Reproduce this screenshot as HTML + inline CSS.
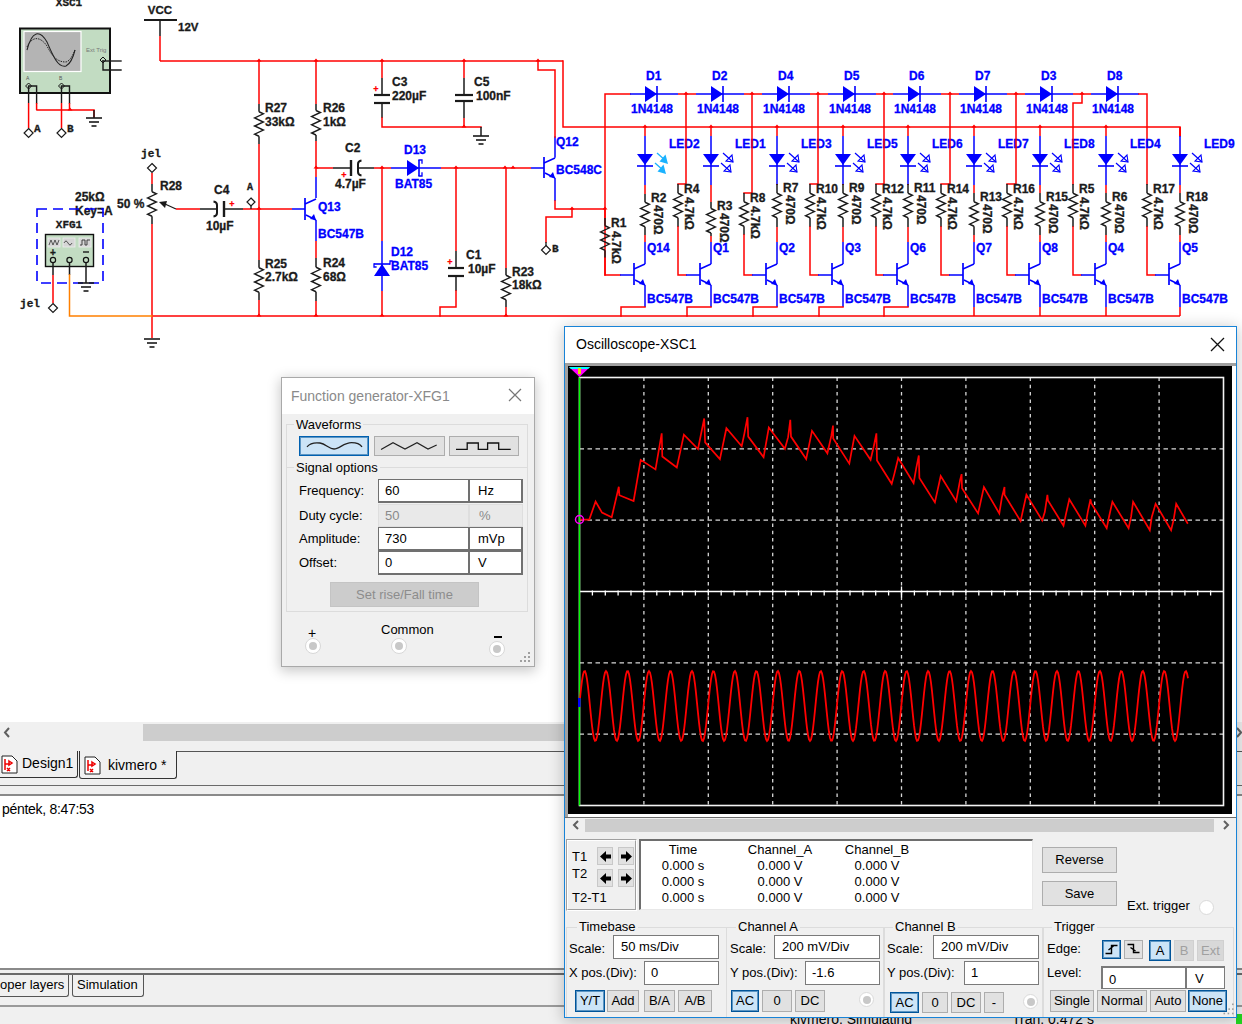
<!DOCTYPE html><html><head><meta charset="utf-8"><title>Multisim</title><style>

*{box-sizing:border-box}
html,body{margin:0;padding:0}
body{width:1242px;height:1024px;overflow:hidden;position:relative;background:#fff;font-family:"Liberation Sans",sans-serif;color:#000}
.a{position:absolute}
.t{position:absolute;white-space:nowrap;font-size:12px;line-height:14px}
.btn{position:absolute;background:#e1e1e1;border:1px solid #adadad;font-size:12px;text-align:center;white-space:nowrap}
.sel{background:#cce4f7;border:1px solid #005499;box-shadow:inset 0 0 0 1px rgba(0,84,153,0.55)}
.inp{position:absolute;background:#fff;border:1px solid #7a7a7a;font-size:12px;white-space:nowrap;padding-left:6px}
.grp{position:absolute;border:1px solid #dcdcdc}
.gl{position:absolute;background:#f0f0f0;padding:0 2px;font-size:12px;line-height:13px;white-space:nowrap}
.radio{position:absolute;border-radius:50%;background:#fff;border:1px solid #dadada}
.radio i{position:absolute;left:3px;top:3px;width:8px;height:8px;border-radius:50%;background:#c8c8c8}

</style></head><body>
<svg class="a" style="left:0;top:0" width="1242" height="360" viewBox="0 0 1242 360"><text x="69" y="6" fill="#1a1a1a" font-family='"Liberation Mono",monospace' font-size="11" font-weight="bold" text-anchor="middle" stroke="#1a1a1a" stroke-width="0.3" >XSC1</text>
<rect x="20" y="28.5" width="90" height="64.5" fill="#c2dcc2" stroke="#111" stroke-width="2"/>
<rect x="24" y="31.5" width="57" height="40" fill="#b4b4b4" stroke="#fff" stroke-width="1.2"/>
<path d="M27 50 C32 30 40 30 47 42 C53 56 58 68 66 66 C70 64 73 58 75 50" fill="none" stroke="#222" stroke-width="1.1"/>
<path d="M27 47 C32 36 40 36 47 46 C53 58 58 62 66 62 C70 61 73 55 75 50" fill="none" stroke="#222" stroke-width="1" stroke-dasharray="1.5,1"/>
<text x="86" y="52" font-family='"Liberation Sans",sans-serif' font-size="6" fill="#777">Ext Trig</text>
<text x="26" y="80" font-family='"Liberation Sans",sans-serif' font-size="5" fill="#555">A</text>
<text x="59" y="80" font-family='"Liberation Sans",sans-serif' font-size="5" fill="#555">B</text>
<path d="M28.6 83 L31.6 86 L28.6 89 L25.6 86 Z" fill="#c2dcc2" stroke="#111" stroke-width="1"/>
<polyline points="28.6,86 36.6,86 36.6,103" fill="none" stroke="#1a1a1a" stroke-width="1.4" stroke-linecap="square"/>
<line x1="28.6" y1="86" x2="28.6" y2="103" stroke="#1a1a1a" stroke-width="1.4"/>
<line x1="28.6" y1="103" x2="28.6" y2="128" stroke="#ff0000" stroke-width="1.5"/>
<path d="M28.6 128.5 L33.1 133 L28.6 137.5 L24.1 133 Z" fill="#fff" stroke="#1a1a1a" stroke-width="1.2"/>
<line x1="36.6" y1="103" x2="36.6" y2="110" stroke="#ff0000" stroke-width="1.5"/>
<path d="M61.5 83 L64.5 86 L61.5 89 L58.5 86 Z" fill="#c2dcc2" stroke="#111" stroke-width="1"/>
<polyline points="61.5,86 69.5,86 69.5,103" fill="none" stroke="#1a1a1a" stroke-width="1.4" stroke-linecap="square"/>
<line x1="61.5" y1="86" x2="61.5" y2="103" stroke="#1a1a1a" stroke-width="1.4"/>
<line x1="61.5" y1="103" x2="61.5" y2="128" stroke="#ff0000" stroke-width="1.5"/>
<path d="M61.5 128.5 L66.0 133 L61.5 137.5 L57.0 133 Z" fill="#fff" stroke="#1a1a1a" stroke-width="1.2"/>
<line x1="69.5" y1="103" x2="69.5" y2="110" stroke="#ff0000" stroke-width="1.5"/>
<polyline points="37,110 94,110 94,117" fill="none" stroke="#ff0000" stroke-width="1.5" stroke-linecap="square"/>
<line x1="94" y1="110" x2="94" y2="118" stroke="#1a1a1a" stroke-width="1.5"/>
<line x1="86" y1="118" x2="102" y2="118" stroke="#1a1a1a" stroke-width="1.6"/>
<line x1="89" y1="122" x2="99" y2="122" stroke="#1a1a1a" stroke-width="1.6"/>
<line x1="91.5" y1="126" x2="96.5" y2="126" stroke="#1a1a1a" stroke-width="1.6"/>
<path d="M67.5 110.5 L70 107.5 L72.5 110.5 Z" fill="#ff0000"/>
<text x="34" y="132" fill="#1a1a1a" font-family='"Liberation Mono",monospace' font-size="11" font-weight="bold" text-anchor="start" stroke="#1a1a1a" stroke-width="0.3" >A</text>
<text x="67" y="132" fill="#1a1a1a" font-family='"Liberation Mono",monospace' font-size="11" font-weight="bold" text-anchor="start" stroke="#1a1a1a" stroke-width="0.3" >B</text>
<path d="M103 57 L106 60 L103 63 L100 60 Z" fill="#c2dcc2" stroke="#111" stroke-width="1"/>
<polyline points="103,61 121,61" fill="none" stroke="#1a1a1a" stroke-width="1.4" stroke-linecap="square"/>
<polyline points="103,61 103,70 121,70" fill="none" stroke="#1a1a1a" stroke-width="1.4" stroke-linecap="square"/>
<line x1="144" y1="20" x2="177" y2="20" stroke="#1a1a1a" stroke-width="2"/>
<line x1="160" y1="20" x2="160" y2="36" stroke="#1a1a1a" stroke-width="1.5"/>
<line x1="160" y1="36" x2="160" y2="61" stroke="#ff0000" stroke-width="1.5"/>
<text x="160" y="14" fill="#1a1a1a" font-family='"Liberation Sans",sans-serif' font-size="11.5" font-weight="bold" text-anchor="middle" stroke="#1a1a1a" stroke-width="0.3" >VCC</text>
<text x="178" y="31" fill="#1a1a1a" font-family='"Liberation Sans",sans-serif' font-size="11.5" font-weight="bold" text-anchor="start" stroke="#1a1a1a" stroke-width="0.3" >12V</text>
<line x1="160" y1="61" x2="563" y2="61" stroke="#ff0000" stroke-width="1.5"/>
<path d="M256.5 61.5 L259 58.5 L261.5 61.5 Z" fill="#ff0000"/>
<path d="M313.5 61.5 L316 58.5 L318.5 61.5 Z" fill="#ff0000"/>
<path d="M379.5 61.5 L382 58.5 L384.5 61.5 Z" fill="#ff0000"/>
<path d="M461.5 61.5 L464 58.5 L466.5 61.5 Z" fill="#ff0000"/>
<path d="M535.5 61.5 L538 58.5 L540.5 61.5 Z" fill="#ff0000"/>
<line x1="259" y1="61" x2="259" y2="104" stroke="#ff0000" stroke-width="1.5"/>
<line x1="259" y1="104" x2="259" y2="111.75" stroke="#1a1a1a" stroke-width="1.5"/>
<polyline points="259,111.75 263.4,113.8 254.6,117.9 263.4,122.0 254.6,126.0 263.4,130.1 254.6,134.2 259,136.25" fill="none" stroke="#1a1a1a" stroke-width="1.4"/>
<line x1="259" y1="136.25" x2="259" y2="144" stroke="#1a1a1a" stroke-width="1.5"/>
<line x1="259" y1="144" x2="259" y2="260" stroke="#ff0000" stroke-width="1.5"/>
<line x1="259" y1="260" x2="259" y2="267.75" stroke="#1a1a1a" stroke-width="1.5"/>
<polyline points="259,267.75 263.4,269.8 254.6,273.9 263.4,278.0 254.6,282.0 263.4,286.1 254.6,290.2 259,292.25" fill="none" stroke="#1a1a1a" stroke-width="1.4"/>
<line x1="259" y1="292.25" x2="259" y2="300" stroke="#1a1a1a" stroke-width="1.5"/>
<line x1="259" y1="300" x2="259" y2="316" stroke="#ff0000" stroke-width="1.5"/>
<text x="265" y="111.5" fill="#1a1a1a" font-family='"Liberation Sans",sans-serif' font-size="12" font-weight="bold" text-anchor="start" stroke="#1a1a1a" stroke-width="0.3" >R27</text>
<text x="265" y="126" fill="#1a1a1a" font-family='"Liberation Sans",sans-serif' font-size="12" font-weight="bold" text-anchor="start" stroke="#1a1a1a" stroke-width="0.3" >33kΩ</text>
<text x="265" y="268" fill="#1a1a1a" font-family='"Liberation Sans",sans-serif' font-size="12" font-weight="bold" text-anchor="start" stroke="#1a1a1a" stroke-width="0.3" >R25</text>
<text x="265" y="281" fill="#1a1a1a" font-family='"Liberation Sans",sans-serif' font-size="12" font-weight="bold" text-anchor="start" stroke="#1a1a1a" stroke-width="0.3" >2.7kΩ</text>
<line x1="316" y1="61" x2="316" y2="104" stroke="#ff0000" stroke-width="1.5"/>
<line x1="316" y1="104" x2="316" y2="110.5" stroke="#1a1a1a" stroke-width="1.5"/>
<polyline points="316,110.5 320.4,112.5 311.6,116.6 320.4,120.7 311.6,124.8 320.4,128.9 311.6,133.0 316,135.0" fill="none" stroke="#1a1a1a" stroke-width="1.4"/>
<line x1="316" y1="135.0" x2="316" y2="141" stroke="#1a1a1a" stroke-width="1.5"/>
<line x1="316" y1="141" x2="316" y2="177" stroke="#ff0000" stroke-width="1.5"/>
<line x1="316" y1="177" x2="316" y2="198" stroke="#0000ff" stroke-width="1.5"/>
<line x1="305" y1="198" x2="305" y2="220" stroke="#0000ff" stroke-width="1.7"/>
<line x1="305" y1="204" x2="316" y2="199" stroke="#0000ff" stroke-width="1.5"/>
<line x1="306" y1="215" x2="316" y2="220" stroke="#0000ff" stroke-width="1.5"/>
<path d="M316 220 L310 219 L314 214 Z" fill="#0000ff"/>
<line x1="316" y1="220" x2="316" y2="241" stroke="#0000ff" stroke-width="1.5"/>
<line x1="316" y1="241" x2="316" y2="258" stroke="#ff0000" stroke-width="1.5"/>
<line x1="316" y1="258" x2="316" y2="267.25" stroke="#1a1a1a" stroke-width="1.5"/>
<polyline points="316,267.25 320.4,269.3 311.6,273.4 320.4,277.5 311.6,281.5 320.4,285.6 311.6,289.7 316,291.75" fill="none" stroke="#1a1a1a" stroke-width="1.4"/>
<line x1="316" y1="291.75" x2="316" y2="301" stroke="#1a1a1a" stroke-width="1.5"/>
<line x1="316" y1="301" x2="316" y2="316" stroke="#ff0000" stroke-width="1.5"/>
<text x="323" y="111.5" fill="#1a1a1a" font-family='"Liberation Sans",sans-serif' font-size="12" font-weight="bold" text-anchor="start" stroke="#1a1a1a" stroke-width="0.3" >R26</text>
<text x="323" y="126" fill="#1a1a1a" font-family='"Liberation Sans",sans-serif' font-size="12" font-weight="bold" text-anchor="start" stroke="#1a1a1a" stroke-width="0.3" >1kΩ</text>
<text x="318" y="211" fill="#0000ff" font-family='"Liberation Sans",sans-serif' font-size="12" font-weight="bold" text-anchor="start" stroke="#0000ff" stroke-width="0.3" >Q13</text>
<text x="318" y="238" fill="#0000ff" font-family='"Liberation Sans",sans-serif' font-size="12" font-weight="bold" text-anchor="start" stroke="#0000ff" stroke-width="0.3" >BC547B</text>
<text x="323" y="267" fill="#1a1a1a" font-family='"Liberation Sans",sans-serif' font-size="12" font-weight="bold" text-anchor="start" stroke="#1a1a1a" stroke-width="0.3" >R24</text>
<text x="323" y="281" fill="#1a1a1a" font-family='"Liberation Sans",sans-serif' font-size="12" font-weight="bold" text-anchor="start" stroke="#1a1a1a" stroke-width="0.3" >68Ω</text>
<line x1="382" y1="61" x2="382" y2="78" stroke="#ff0000" stroke-width="1.5"/>
<line x1="382" y1="78" x2="382" y2="95" stroke="#1a1a1a" stroke-width="1.5"/>
<line x1="374" y1="95" x2="390" y2="95" stroke="#1a1a1a" stroke-width="2.2"/>
<line x1="374" y1="103" x2="390" y2="103" stroke="#1a1a1a" stroke-width="2.2"/>
<line x1="382" y1="103" x2="382" y2="118" stroke="#1a1a1a" stroke-width="1.5"/>
<polyline points="382,118 382,127 481,127" fill="none" stroke="#ff0000" stroke-width="1.5" stroke-linecap="square"/>
<text x="376" y="92" fill="#ff0000" font-family='"Liberation Sans",sans-serif' font-size="9" font-weight="bold" text-anchor="middle" stroke="#ff0000" stroke-width="0.3" >+</text>
<text x="392" y="86" fill="#1a1a1a" font-family='"Liberation Sans",sans-serif' font-size="12" font-weight="bold" text-anchor="start" stroke="#1a1a1a" stroke-width="0.3" >C3</text>
<text x="392" y="100" fill="#1a1a1a" font-family='"Liberation Sans",sans-serif' font-size="12" font-weight="bold" text-anchor="start" stroke="#1a1a1a" stroke-width="0.3" >220µF</text>
<line x1="464" y1="61" x2="464" y2="78" stroke="#ff0000" stroke-width="1.5"/>
<line x1="464" y1="78" x2="464" y2="95" stroke="#1a1a1a" stroke-width="1.5"/>
<line x1="455" y1="95" x2="473" y2="95" stroke="#1a1a1a" stroke-width="2.2"/>
<line x1="455" y1="101" x2="473" y2="101" stroke="#1a1a1a" stroke-width="2.2"/>
<line x1="464" y1="101" x2="464" y2="118" stroke="#1a1a1a" stroke-width="1.5"/>
<line x1="464" y1="118" x2="464" y2="127" stroke="#ff0000" stroke-width="1.5"/>
<path d="M461.5 127.5 L464 124.5 L466.5 127.5 Z" fill="#ff0000"/>
<text x="474" y="86" fill="#1a1a1a" font-family='"Liberation Sans",sans-serif' font-size="12" font-weight="bold" text-anchor="start" stroke="#1a1a1a" stroke-width="0.3" >C5</text>
<text x="476" y="100" fill="#1a1a1a" font-family='"Liberation Sans",sans-serif' font-size="12" font-weight="bold" text-anchor="start" stroke="#1a1a1a" stroke-width="0.3" >100nF</text>
<line x1="481" y1="127" x2="481" y2="136" stroke="#1a1a1a" stroke-width="1.5"/>
<line x1="473" y1="136" x2="489" y2="136" stroke="#1a1a1a" stroke-width="1.6"/>
<line x1="476" y1="140" x2="486" y2="140" stroke="#1a1a1a" stroke-width="1.6"/>
<line x1="478.5" y1="144" x2="483.5" y2="144" stroke="#1a1a1a" stroke-width="1.6"/>
<path d="M313.5 168.5 L316 165.5 L318.5 168.5 Z" fill="#ff0000"/>
<line x1="316" y1="168" x2="333" y2="168" stroke="#ff0000" stroke-width="1.5"/>
<line x1="333" y1="168" x2="351" y2="168" stroke="#1a1a1a" stroke-width="1.5"/>
<line x1="351" y1="160" x2="351" y2="176" stroke="#1a1a1a" stroke-width="2.4"/>
<path d="M361.5 160.5 Q358 161 358 164 V172 Q358 175 361.5 175.5" fill="none" stroke="#1a1a1a" stroke-width="2"/>
<line x1="357" y1="168" x2="374" y2="168" stroke="#1a1a1a" stroke-width="1.5"/>
<line x1="374" y1="168" x2="391" y2="168" stroke="#ff0000" stroke-width="1.5"/>
<path d="M379.5 168.5 L382 165.5 L384.5 168.5 Z" fill="#ff0000"/>
<text x="344" y="178" fill="#ff0000" font-family='"Liberation Sans",sans-serif' font-size="9" font-weight="bold" text-anchor="middle" stroke="#ff0000" stroke-width="0.3" >+</text>
<text x="345" y="152" fill="#1a1a1a" font-family='"Liberation Sans",sans-serif' font-size="12" font-weight="bold" text-anchor="start" stroke="#1a1a1a" stroke-width="0.3" >C2</text>
<text x="335" y="188" fill="#1a1a1a" font-family='"Liberation Sans",sans-serif' font-size="12" font-weight="bold" text-anchor="start" stroke="#1a1a1a" stroke-width="0.3" >4.7µF</text>
<line x1="391" y1="168" x2="441" y2="168" stroke="#0000ff" stroke-width="1.5"/>
<path d="M407 160 L419 168 L407 176 Z" fill="#0000ff"/>
<line x1="419" y1="160" x2="419" y2="176" stroke="#0000ff" stroke-width="1.6"/>
<polyline points="419,160 422,160 422,163" fill="none" stroke="#0000ff" stroke-width="1.3" stroke-linecap="square"/>
<polyline points="419,176 422,176 422,173" fill="none" stroke="#0000ff" stroke-width="1.3" stroke-linecap="square"/>
<text x="404" y="154" fill="#0000ff" font-family='"Liberation Sans",sans-serif' font-size="12" font-weight="bold" text-anchor="start" stroke="#0000ff" stroke-width="0.3" >D13</text>
<text x="395" y="188" fill="#0000ff" font-family='"Liberation Sans",sans-serif' font-size="12" font-weight="bold" text-anchor="start" stroke="#0000ff" stroke-width="0.3" >BAT85</text>
<line x1="441" y1="168" x2="531" y2="168" stroke="#ff0000" stroke-width="1.5"/>
<path d="M453.5 168.5 L456 165.5 L458.5 168.5 Z" fill="#ff0000"/>
<path d="M502.5 168.5 L505 165.5 L507.5 168.5 Z" fill="#ff0000"/>
<path d="M510.5 168.5 L513 165.5 L515.5 168.5 Z" fill="#ff0000"/>
<line x1="531" y1="168" x2="544" y2="168" stroke="#0000ff" stroke-width="1.5"/>
<line x1="544" y1="157" x2="544" y2="178" stroke="#0000ff" stroke-width="1.7"/>
<line x1="544" y1="163" x2="555" y2="158" stroke="#0000ff" stroke-width="1.5"/>
<line x1="545" y1="173" x2="555" y2="178" stroke="#0000ff" stroke-width="1.5"/>
<path d="M555 178 L549 177 L553 172 Z" fill="#0000ff"/>
<polyline points="555,157 555,137" fill="none" stroke="#0000ff" stroke-width="1.5" stroke-linecap="square"/>
<polyline points="538,61 538,70 555,70 555,137" fill="none" stroke="#ff0000" stroke-width="1.5" stroke-linecap="square"/>
<polyline points="563,61 563,127 1180,127 1180,136" fill="none" stroke="#ff0000" stroke-width="1.5" stroke-linecap="square"/>
<line x1="555" y1="178" x2="555" y2="201" stroke="#0000ff" stroke-width="1.5"/>
<polyline points="555,201 555,209 605,209" fill="none" stroke="#ff0000" stroke-width="1.5" stroke-linecap="square"/>
<path d="M569.5 209.5 L572 206.5 L574.5 209.5 Z" fill="#ff0000"/>
<polyline points="572,209 572,217 546,217 546,242" fill="none" stroke="#ff0000" stroke-width="1.5" stroke-linecap="square"/>
<line x1="546" y1="242" x2="546" y2="246" stroke="#1a1a1a" stroke-width="1.3"/>
<path d="M546 245.5 L550.5 250 L546 254.5 L541.5 250 Z" fill="#fff" stroke="#1a1a1a" stroke-width="1.2"/>
<text x="552" y="252" fill="#1a1a1a" font-family='"Liberation Mono",monospace' font-size="11" font-weight="bold" text-anchor="start" stroke="#1a1a1a" stroke-width="0.3" >B</text>
<text x="556" y="146" fill="#0000ff" font-family='"Liberation Sans",sans-serif' font-size="12" font-weight="bold" text-anchor="start" stroke="#0000ff" stroke-width="0.3" >Q12</text>
<text x="556" y="174" fill="#0000ff" font-family='"Liberation Sans",sans-serif' font-size="12" font-weight="bold" text-anchor="start" stroke="#0000ff" stroke-width="0.3" >BC548C</text>
<line x1="382" y1="168" x2="382" y2="241" stroke="#ff0000" stroke-width="1.5"/>
<line x1="382" y1="241" x2="382" y2="291" stroke="#0000ff" stroke-width="1.5"/>
<path d="M374 276 L390 276 L382 264 Z" fill="#0000ff"/>
<line x1="374" y1="264" x2="390" y2="264" stroke="#0000ff" stroke-width="1.6"/>
<polyline points="374,264 374,267 376,267" fill="none" stroke="#0000ff" stroke-width="1.3" stroke-linecap="square"/>
<polyline points="390,264 390,261 392,261" fill="none" stroke="#0000ff" stroke-width="1.3" stroke-linecap="square"/>
<line x1="382" y1="291" x2="382" y2="316" stroke="#ff0000" stroke-width="1.5"/>
<text x="391" y="256" fill="#0000ff" font-family='"Liberation Sans",sans-serif' font-size="12" font-weight="bold" text-anchor="start" stroke="#0000ff" stroke-width="0.3" >D12</text>
<text x="391" y="270" fill="#0000ff" font-family='"Liberation Sans",sans-serif' font-size="12" font-weight="bold" text-anchor="start" stroke="#0000ff" stroke-width="0.3" >BAT85</text>
<line x1="456" y1="168" x2="456" y2="251" stroke="#ff0000" stroke-width="1.5"/>
<line x1="456" y1="251" x2="456" y2="268" stroke="#1a1a1a" stroke-width="1.5"/>
<line x1="448" y1="268" x2="464" y2="268" stroke="#1a1a1a" stroke-width="2.2"/>
<line x1="448" y1="276" x2="464" y2="276" stroke="#1a1a1a" stroke-width="2.2"/>
<line x1="456" y1="276" x2="456" y2="291" stroke="#1a1a1a" stroke-width="1.5"/>
<polyline points="456,291 456,307 440,307 440,316" fill="none" stroke="#ff0000" stroke-width="1.5" stroke-linecap="square"/>
<text x="450" y="265" fill="#ff0000" font-family='"Liberation Sans",sans-serif' font-size="9" font-weight="bold" text-anchor="middle" stroke="#ff0000" stroke-width="0.3" >+</text>
<text x="466" y="259" fill="#1a1a1a" font-family='"Liberation Sans",sans-serif' font-size="12" font-weight="bold" text-anchor="start" stroke="#1a1a1a" stroke-width="0.3" >C1</text>
<text x="468" y="273" fill="#1a1a1a" font-family='"Liberation Sans",sans-serif' font-size="12" font-weight="bold" text-anchor="start" stroke="#1a1a1a" stroke-width="0.3" >10µF</text>
<line x1="506" y1="168" x2="506" y2="268" stroke="#ff0000" stroke-width="1.5"/>
<line x1="506" y1="268" x2="506" y2="275.25" stroke="#1a1a1a" stroke-width="1.5"/>
<polyline points="506,275.25 510.4,277.3 501.6,281.4 510.4,285.5 501.6,289.5 510.4,293.6 501.6,297.7 506,299.75" fill="none" stroke="#1a1a1a" stroke-width="1.4"/>
<line x1="506" y1="299.75" x2="506" y2="307" stroke="#1a1a1a" stroke-width="1.5"/>
<line x1="506" y1="307" x2="506" y2="316" stroke="#ff0000" stroke-width="1.5"/>
<path d="M503.5 316.5 L506 313.5 L508.5 316.5 Z" fill="#ff0000"/>
<text x="512" y="276" fill="#1a1a1a" font-family='"Liberation Sans",sans-serif' font-size="12" font-weight="bold" text-anchor="start" stroke="#1a1a1a" stroke-width="0.3" >R23</text>
<text x="512" y="289" fill="#1a1a1a" font-family='"Liberation Sans",sans-serif' font-size="12" font-weight="bold" text-anchor="start" stroke="#1a1a1a" stroke-width="0.3" >18kΩ</text>
<line x1="152" y1="316" x2="1180" y2="316" stroke="#ff0000" stroke-width="1.5"/>
<path d="M256.5 316.5 L259 313.5 L261.5 316.5 Z" fill="#ff0000"/>
<path d="M313.5 316.5 L316 313.5 L318.5 316.5 Z" fill="#ff0000"/>
<path d="M379.5 316.5 L382 313.5 L384.5 316.5 Z" fill="#ff0000"/>
<text x="151" y="157" fill="#1a1a1a" font-family='"Liberation Mono",monospace' font-size="11" font-weight="bold" text-anchor="middle" stroke="#1a1a1a" stroke-width="0.3" >jel</text>
<path d="M152 163.5 L156.5 168 L152 172.5 L147.5 168 Z" fill="#fff" stroke="#1a1a1a" stroke-width="1.2"/>
<line x1="152" y1="173" x2="152" y2="184" stroke="#ff0000" stroke-width="1.5"/>
<line x1="152" y1="184" x2="152" y2="191.75" stroke="#1a1a1a" stroke-width="1.5"/>
<polyline points="152,191.75 156.4,193.8 147.6,197.9 156.4,202.0 147.6,206.0 156.4,210.1 147.6,214.2 152,216.25" fill="none" stroke="#1a1a1a" stroke-width="1.4"/>
<line x1="152" y1="216.25" x2="152" y2="224" stroke="#1a1a1a" stroke-width="1.5"/>
<line x1="152" y1="224" x2="152" y2="338" stroke="#ff0000" stroke-width="1.5"/>
<line x1="144" y1="339" x2="160" y2="339" stroke="#1a1a1a" stroke-width="1.6"/>
<line x1="147" y1="343" x2="157" y2="343" stroke="#1a1a1a" stroke-width="1.6"/>
<line x1="149.5" y1="347" x2="154.5" y2="347" stroke="#1a1a1a" stroke-width="1.6"/>
<line x1="176" y1="209" x2="165" y2="204" stroke="#1a1a1a" stroke-width="1.3"/>
<path d="M159 202 L167 201 L165 208 Z" fill="#1a1a1a"/>
<line x1="176" y1="209" x2="200" y2="209" stroke="#ff0000" stroke-width="1.5"/>
<text x="160" y="190" fill="#1a1a1a" font-family='"Liberation Sans",sans-serif' font-size="12" font-weight="bold" text-anchor="start" stroke="#1a1a1a" stroke-width="0.3" >R28</text>
<text x="117" y="208" fill="#1a1a1a" font-family='"Liberation Sans",sans-serif' font-size="12" font-weight="bold" text-anchor="start" stroke="#1a1a1a" stroke-width="0.3" >50 %</text>
<text x="75" y="201" fill="#1a1a1a" font-family='"Liberation Sans",sans-serif' font-size="12" font-weight="bold" text-anchor="start" stroke="#1a1a1a" stroke-width="0.3" >25kΩ</text>
<text x="75" y="215" fill="#1a1a1a" font-family='"Liberation Sans",sans-serif' font-size="12" font-weight="bold" text-anchor="start" stroke="#1a1a1a" stroke-width="0.3" >Key=A</text>
<line x1="200" y1="209" x2="217" y2="209" stroke="#1a1a1a" stroke-width="1.5"/>
<path d="M213.5 201.5 Q217 202 217 205 V213 Q217 216 213.5 216.5" fill="none" stroke="#1a1a1a" stroke-width="2"/>
<line x1="224" y1="201" x2="224" y2="217" stroke="#1a1a1a" stroke-width="2.4"/>
<line x1="224" y1="209" x2="243" y2="209" stroke="#1a1a1a" stroke-width="1.5"/>
<text x="232" y="207" fill="#ff0000" font-family='"Liberation Sans",sans-serif' font-size="9" font-weight="bold" text-anchor="middle" stroke="#ff0000" stroke-width="0.3" >+</text>
<text x="214" y="194" fill="#1a1a1a" font-family='"Liberation Sans",sans-serif' font-size="12" font-weight="bold" text-anchor="start" stroke="#1a1a1a" stroke-width="0.3" >C4</text>
<text x="206" y="230" fill="#1a1a1a" font-family='"Liberation Sans",sans-serif' font-size="12" font-weight="bold" text-anchor="start" stroke="#1a1a1a" stroke-width="0.3" >10µF</text>
<line x1="243" y1="209" x2="292" y2="209" stroke="#ff0000" stroke-width="1.5"/>
<line x1="292" y1="209" x2="305" y2="209" stroke="#0000ff" stroke-width="1.5"/>
<path d="M251 198 L255 202 L251 206 L247 202 Z" fill="#fff" stroke="#1a1a1a" stroke-width="1.2"/>
<line x1="251" y1="206" x2="251" y2="209" stroke="#1a1a1a" stroke-width="1.3"/>
<text x="250" y="190" fill="#1a1a1a" font-family='"Liberation Mono",monospace' font-size="10" font-weight="bold" text-anchor="middle" stroke="#1a1a1a" stroke-width="0.3" >A</text>
<path d="M256.5 209.5 L259 206.5 L261.5 209.5 Z" fill="#ff0000"/>
<rect x="37" y="209" width="66" height="74" fill="none" stroke="#0000ff" stroke-width="1.6" stroke-dasharray="10,6"/>
<text x="69" y="228" fill="#1a1a1a" font-family='"Liberation Mono",monospace' font-size="11" font-weight="bold" text-anchor="middle" stroke="#1a1a1a" stroke-width="0.3" >XFG1</text>
<rect x="45.5" y="234.5" width="48" height="32" fill="#c2dcc2" stroke="#111" stroke-width="1.4"/>
<rect x="48" y="238" width="12" height="9" fill="#d6d6d6" stroke="#eee" stroke-width="0.8"/>
<rect x="63" y="238" width="12" height="9" fill="#d6d6d6" stroke="#eee" stroke-width="0.8"/>
<rect x="79" y="238" width="12" height="9" fill="#d6d6d6" stroke="#eee" stroke-width="0.8"/>
<path d="M49 245 L51 240 L53 245 L55 240 L57 245 L59 240" stroke="#333" stroke-width="0.8" fill="none"/>
<path d="M64 243 Q66 239 68 243 Q70 247 72 243" stroke="#333" stroke-width="0.8" fill="none"/>
<path d="M80 245 H82 V240 H85 V245 H87 V240 H90" stroke="#333" stroke-width="0.9" fill="none"/>
<text x="53" y="256" fill="#1a1a1a" font-family='"Liberation Sans",sans-serif' font-size="10" font-weight="bold" text-anchor="middle" stroke="#1a1a1a" stroke-width="0.3" >+</text>
<line x1="83" y1="252" x2="89" y2="252" stroke="#1a1a1a" stroke-width="1.4"/>
<circle cx="53" cy="260" r="2.6" fill="#c2dcc2" stroke="#111" stroke-width="1.2"/>
<circle cx="69.5" cy="260" r="2.6" fill="#c2dcc2" stroke="#111" stroke-width="1.2"/>
<circle cx="86" cy="260" r="2.6" fill="#c2dcc2" stroke="#111" stroke-width="1.2"/>
<line x1="53" y1="263" x2="53" y2="275" stroke="#1a1a1a" stroke-width="1.5"/>
<line x1="53" y1="275" x2="53" y2="303" stroke="#ff0000" stroke-width="1.5"/>
<path d="M53 303.5 L57.5 308 L53 312.5 L48.5 308 Z" fill="#fff" stroke="#1a1a1a" stroke-width="1.2"/>
<text x="30" y="307" fill="#1a1a1a" font-family='"Liberation Mono",monospace' font-size="11" font-weight="bold" text-anchor="middle" stroke="#1a1a1a" stroke-width="0.3" >jel</text>
<line x1="69.5" y1="263" x2="69.5" y2="275" stroke="#1a1a1a" stroke-width="1.5"/>
<polyline points="69.5,275 69.5,316 152,316" fill="none" stroke="#ff8000" stroke-width="1.5" stroke-linecap="square"/>
<line x1="86" y1="263" x2="86" y2="283" stroke="#1a1a1a" stroke-width="1.5"/>
<line x1="78" y1="283" x2="94" y2="283" stroke="#1a1a1a" stroke-width="1.6"/>
<line x1="81" y1="287" x2="91" y2="287" stroke="#1a1a1a" stroke-width="1.6"/>
<line x1="83.5" y1="291" x2="88.5" y2="291" stroke="#1a1a1a" stroke-width="1.6"/>
<polyline points="605,275 605,94 630,94" fill="none" stroke="#ff0000" stroke-width="1.5" stroke-linecap="square"/>
<line x1="630" y1="94" x2="678" y2="94" stroke="#0000ff" stroke-width="1.5"/>
<path d="M645 86 L657 94 L645 102 Z" fill="#0000ff"/>
<line x1="657" y1="86" x2="657" y2="102" stroke="#0000ff" stroke-width="1.6"/>
<text x="646" y="79.5" fill="#0000ff" font-family='"Liberation Sans",sans-serif' font-size="12" font-weight="bold" text-anchor="start" stroke="#0000ff" stroke-width="0.3" >D1</text>
<text x="631" y="113" fill="#0000ff" font-family='"Liberation Sans",sans-serif' font-size="12" font-weight="bold" text-anchor="start" stroke="#0000ff" stroke-width="0.3" >1N4148</text>
<line x1="678" y1="94" x2="696" y2="94" stroke="#ff0000" stroke-width="1.5"/>
<line x1="696" y1="94" x2="744" y2="94" stroke="#0000ff" stroke-width="1.5"/>
<path d="M711 86 L723 94 L711 102 Z" fill="#0000ff"/>
<line x1="723" y1="86" x2="723" y2="102" stroke="#0000ff" stroke-width="1.6"/>
<text x="712" y="79.5" fill="#0000ff" font-family='"Liberation Sans",sans-serif' font-size="12" font-weight="bold" text-anchor="start" stroke="#0000ff" stroke-width="0.3" >D2</text>
<text x="697" y="113" fill="#0000ff" font-family='"Liberation Sans",sans-serif' font-size="12" font-weight="bold" text-anchor="start" stroke="#0000ff" stroke-width="0.3" >1N4148</text>
<line x1="744" y1="94" x2="762" y2="94" stroke="#ff0000" stroke-width="1.5"/>
<line x1="762" y1="94" x2="810" y2="94" stroke="#0000ff" stroke-width="1.5"/>
<path d="M777 86 L789 94 L777 102 Z" fill="#0000ff"/>
<line x1="789" y1="86" x2="789" y2="102" stroke="#0000ff" stroke-width="1.6"/>
<text x="778" y="79.5" fill="#0000ff" font-family='"Liberation Sans",sans-serif' font-size="12" font-weight="bold" text-anchor="start" stroke="#0000ff" stroke-width="0.3" >D4</text>
<text x="763" y="113" fill="#0000ff" font-family='"Liberation Sans",sans-serif' font-size="12" font-weight="bold" text-anchor="start" stroke="#0000ff" stroke-width="0.3" >1N4148</text>
<line x1="810" y1="94" x2="828" y2="94" stroke="#ff0000" stroke-width="1.5"/>
<line x1="828" y1="94" x2="876" y2="94" stroke="#0000ff" stroke-width="1.5"/>
<path d="M843 86 L855 94 L843 102 Z" fill="#0000ff"/>
<line x1="855" y1="86" x2="855" y2="102" stroke="#0000ff" stroke-width="1.6"/>
<text x="844" y="79.5" fill="#0000ff" font-family='"Liberation Sans",sans-serif' font-size="12" font-weight="bold" text-anchor="start" stroke="#0000ff" stroke-width="0.3" >D5</text>
<text x="829" y="113" fill="#0000ff" font-family='"Liberation Sans",sans-serif' font-size="12" font-weight="bold" text-anchor="start" stroke="#0000ff" stroke-width="0.3" >1N4148</text>
<line x1="876" y1="94" x2="893" y2="94" stroke="#ff0000" stroke-width="1.5"/>
<line x1="893" y1="94" x2="941" y2="94" stroke="#0000ff" stroke-width="1.5"/>
<path d="M908 86 L920 94 L908 102 Z" fill="#0000ff"/>
<line x1="920" y1="86" x2="920" y2="102" stroke="#0000ff" stroke-width="1.6"/>
<text x="909" y="79.5" fill="#0000ff" font-family='"Liberation Sans",sans-serif' font-size="12" font-weight="bold" text-anchor="start" stroke="#0000ff" stroke-width="0.3" >D6</text>
<text x="894" y="113" fill="#0000ff" font-family='"Liberation Sans",sans-serif' font-size="12" font-weight="bold" text-anchor="start" stroke="#0000ff" stroke-width="0.3" >1N4148</text>
<line x1="941" y1="94" x2="959" y2="94" stroke="#ff0000" stroke-width="1.5"/>
<line x1="959" y1="94" x2="1007" y2="94" stroke="#0000ff" stroke-width="1.5"/>
<path d="M974 86 L986 94 L974 102 Z" fill="#0000ff"/>
<line x1="986" y1="86" x2="986" y2="102" stroke="#0000ff" stroke-width="1.6"/>
<text x="975" y="79.5" fill="#0000ff" font-family='"Liberation Sans",sans-serif' font-size="12" font-weight="bold" text-anchor="start" stroke="#0000ff" stroke-width="0.3" >D7</text>
<text x="960" y="113" fill="#0000ff" font-family='"Liberation Sans",sans-serif' font-size="12" font-weight="bold" text-anchor="start" stroke="#0000ff" stroke-width="0.3" >1N4148</text>
<line x1="1007" y1="94" x2="1025" y2="94" stroke="#ff0000" stroke-width="1.5"/>
<line x1="1025" y1="94" x2="1073" y2="94" stroke="#0000ff" stroke-width="1.5"/>
<path d="M1040 86 L1052 94 L1040 102 Z" fill="#0000ff"/>
<line x1="1052" y1="86" x2="1052" y2="102" stroke="#0000ff" stroke-width="1.6"/>
<text x="1041" y="79.5" fill="#0000ff" font-family='"Liberation Sans",sans-serif' font-size="12" font-weight="bold" text-anchor="start" stroke="#0000ff" stroke-width="0.3" >D3</text>
<text x="1026" y="113" fill="#0000ff" font-family='"Liberation Sans",sans-serif' font-size="12" font-weight="bold" text-anchor="start" stroke="#0000ff" stroke-width="0.3" >1N4148</text>
<line x1="1073" y1="94" x2="1091" y2="94" stroke="#ff0000" stroke-width="1.5"/>
<line x1="1091" y1="94" x2="1139" y2="94" stroke="#0000ff" stroke-width="1.5"/>
<path d="M1106 86 L1118 94 L1106 102 Z" fill="#0000ff"/>
<line x1="1118" y1="86" x2="1118" y2="102" stroke="#0000ff" stroke-width="1.6"/>
<text x="1107" y="79.5" fill="#0000ff" font-family='"Liberation Sans",sans-serif' font-size="12" font-weight="bold" text-anchor="start" stroke="#0000ff" stroke-width="0.3" >D8</text>
<text x="1092" y="113" fill="#0000ff" font-family='"Liberation Sans",sans-serif' font-size="12" font-weight="bold" text-anchor="start" stroke="#0000ff" stroke-width="0.3" >1N4148</text>
<polyline points="1139,94 1147,94 1147,184" fill="none" stroke="#ff0000" stroke-width="1.5" stroke-linecap="square"/>
<path d="M683.5 94.5 L686 91.5 L688.5 94.5 Z" fill="#ff0000"/>
<path d="M749.5 94.5 L752 91.5 L754.5 94.5 Z" fill="#ff0000"/>
<path d="M815.5 94.5 L818 91.5 L820.5 94.5 Z" fill="#ff0000"/>
<path d="M881.5 94.5 L884 91.5 L886.5 94.5 Z" fill="#ff0000"/>
<path d="M947.5 94.5 L950 91.5 L952.5 94.5 Z" fill="#ff0000"/>
<path d="M1013.5 94.5 L1016 91.5 L1018.5 94.5 Z" fill="#ff0000"/>
<path d="M1079.5 94.5 L1082 91.5 L1084.5 94.5 Z" fill="#ff0000"/>
<path d="M642.5 127.5 L645 124.5 L647.5 127.5 Z" fill="#ff0000"/>
<line x1="645" y1="127" x2="645" y2="136" stroke="#ff0000" stroke-width="1.5"/>
<line x1="645" y1="136" x2="645" y2="185" stroke="#0000ff" stroke-width="1.5"/>
<path d="M637 154 L653 154 L645 165 Z" fill="#0000ff"/>
<line x1="637" y1="166" x2="653" y2="166" stroke="#0000ff" stroke-width="1.6"/>
<line x1="657" y1="153" x2="666" y2="161" stroke="#1ab2ff" stroke-width="1.4"/>
<path d="M668 164 L659.5 161.5 L665.5 154.5 Z" fill="#1ab2ff"/>
<line x1="655" y1="163" x2="664" y2="171" stroke="#1ab2ff" stroke-width="1.4"/>
<path d="M666 174 L657.5 171.5 L663.5 164.5 Z" fill="#1ab2ff"/>
<text x="669" y="148" fill="#0000ff" font-family='"Liberation Sans",sans-serif' font-size="12" font-weight="bold" text-anchor="start" stroke="#0000ff" stroke-width="0.3" >LED2</text>
<line x1="645" y1="185" x2="645" y2="194" stroke="#ff0000" stroke-width="1.5"/>
<line x1="645" y1="194" x2="645" y2="202.25" stroke="#1a1a1a" stroke-width="1.5"/>
<polyline points="645,202.25 649.4,204.3 640.6,208.4 649.4,212.5 640.6,216.5 649.4,220.6 640.6,224.7 645,226.75" fill="none" stroke="#1a1a1a" stroke-width="1.4"/>
<line x1="645" y1="226.75" x2="645" y2="235" stroke="#1a1a1a" stroke-width="1.5"/>
<line x1="645" y1="235" x2="645" y2="242" stroke="#ff0000" stroke-width="1.5"/>
<line x1="645" y1="242" x2="645" y2="264" stroke="#0000ff" stroke-width="1.5"/>
<text x="651" y="202" fill="#1a1a1a" font-family='"Liberation Sans",sans-serif' font-size="12" font-weight="bold" text-anchor="start" stroke="#1a1a1a" stroke-width="0.3" >R2</text>
<text transform="translate(654,205) rotate(90)" fill="#1a1a1a" font-family='"Liberation Sans",sans-serif' font-size="12" font-weight="bold" stroke="#1a1a1a" stroke-width="0.3">470Ω</text>
<line x1="634" y1="263" x2="634" y2="285" stroke="#0000ff" stroke-width="1.7"/>
<line x1="634" y1="269" x2="645" y2="264" stroke="#0000ff" stroke-width="1.5"/>
<line x1="635" y1="280" x2="645" y2="285" stroke="#0000ff" stroke-width="1.5"/>
<path d="M645 285 L639 284 L643 279 Z" fill="#0000ff"/>
<line x1="645" y1="285" x2="645" y2="307" stroke="#0000ff" stroke-width="1.5"/>
<polyline points="645,307 621,307 621,316" fill="none" stroke="#ff0000" stroke-width="1.5" stroke-linecap="square"/>
<text x="647" y="252" fill="#0000ff" font-family='"Liberation Sans",sans-serif' font-size="12" font-weight="bold" text-anchor="start" stroke="#0000ff" stroke-width="0.3" >Q14</text>
<text x="647" y="303" fill="#0000ff" font-family='"Liberation Sans",sans-serif' font-size="12" font-weight="bold" text-anchor="start" stroke="#0000ff" stroke-width="0.3" >BC547B</text>
<line x1="605" y1="209" x2="605" y2="218" stroke="#ff0000" stroke-width="1.5"/>
<path d="M602.5 209.5 L605 206.5 L607.5 209.5 Z" fill="#ff0000"/>
<line x1="605" y1="218" x2="605" y2="225.75" stroke="#1a1a1a" stroke-width="1.5"/>
<polyline points="605,225.75 609.4,227.8 600.6,231.9 609.4,236.0 600.6,240.0 609.4,244.1 600.6,248.2 605,250.25" fill="none" stroke="#1a1a1a" stroke-width="1.4"/>
<line x1="605" y1="250.25" x2="605" y2="258" stroke="#1a1a1a" stroke-width="1.5"/>
<polyline points="605,258 605,275 620,275" fill="none" stroke="#ff0000" stroke-width="1.5" stroke-linecap="square"/>
<line x1="620" y1="275" x2="634" y2="275" stroke="#0000ff" stroke-width="1.5"/>
<text x="611" y="227" fill="#1a1a1a" font-family='"Liberation Sans",sans-serif' font-size="12" font-weight="bold" text-anchor="start" stroke="#1a1a1a" stroke-width="0.3" >R1</text>
<text transform="translate(611.5,231) rotate(90)" fill="#1a1a1a" font-family='"Liberation Sans",sans-serif' font-size="12" font-weight="bold" stroke="#1a1a1a" stroke-width="0.3">4.7kΩ</text>
<path d="M708.5 127.5 L711 124.5 L713.5 127.5 Z" fill="#ff0000"/>
<line x1="711" y1="127" x2="711" y2="136" stroke="#ff0000" stroke-width="1.5"/>
<line x1="711" y1="136" x2="711" y2="185" stroke="#0000ff" stroke-width="1.5"/>
<path d="M703 154 L719 154 L711 165 Z" fill="#0000ff"/>
<line x1="703" y1="166" x2="719" y2="166" stroke="#0000ff" stroke-width="1.6"/>
<line x1="723" y1="153" x2="733" y2="162" stroke="#0000ff" stroke-width="1.2"/>
<path d="M733 162 L726 161 L732 155 Z" fill="none" stroke="#0000ff" stroke-width="1.1"/>
<line x1="721" y1="163" x2="731" y2="172" stroke="#0000ff" stroke-width="1.2"/>
<path d="M731 172 L724 171 L730 165 Z" fill="none" stroke="#0000ff" stroke-width="1.1"/>
<text x="735" y="148" fill="#0000ff" font-family='"Liberation Sans",sans-serif' font-size="12" font-weight="bold" text-anchor="start" stroke="#0000ff" stroke-width="0.3" >LED1</text>
<line x1="711" y1="185" x2="711" y2="202" stroke="#ff0000" stroke-width="1.5"/>
<line x1="711" y1="202" x2="711" y2="208.5" stroke="#1a1a1a" stroke-width="1.5"/>
<polyline points="711,208.5 715.4,210.5 706.6,214.6 715.4,218.7 706.6,222.8 715.4,226.9 706.6,231.0 711,233.0" fill="none" stroke="#1a1a1a" stroke-width="1.4"/>
<line x1="711" y1="233.0" x2="711" y2="236" stroke="#1a1a1a" stroke-width="1.5"/>
<line x1="711" y1="236" x2="711" y2="242" stroke="#ff0000" stroke-width="1.5"/>
<line x1="711" y1="242" x2="711" y2="264" stroke="#0000ff" stroke-width="1.5"/>
<text x="717" y="210" fill="#1a1a1a" font-family='"Liberation Sans",sans-serif' font-size="12" font-weight="bold" text-anchor="start" stroke="#1a1a1a" stroke-width="0.3" >R3</text>
<text transform="translate(720,213) rotate(90)" fill="#1a1a1a" font-family='"Liberation Sans",sans-serif' font-size="12" font-weight="bold" stroke="#1a1a1a" stroke-width="0.3">470Ω</text>
<line x1="700" y1="263" x2="700" y2="285" stroke="#0000ff" stroke-width="1.7"/>
<line x1="700" y1="269" x2="711" y2="264" stroke="#0000ff" stroke-width="1.5"/>
<line x1="701" y1="280" x2="711" y2="285" stroke="#0000ff" stroke-width="1.5"/>
<path d="M711 285 L705 284 L709 279 Z" fill="#0000ff"/>
<line x1="711" y1="285" x2="711" y2="307" stroke="#0000ff" stroke-width="1.5"/>
<polyline points="711,307 687,307 687,316" fill="none" stroke="#ff0000" stroke-width="1.5" stroke-linecap="square"/>
<text x="713" y="252" fill="#0000ff" font-family='"Liberation Sans",sans-serif' font-size="12" font-weight="bold" text-anchor="start" stroke="#0000ff" stroke-width="0.3" >Q1</text>
<text x="713" y="303" fill="#0000ff" font-family='"Liberation Sans",sans-serif' font-size="12" font-weight="bold" text-anchor="start" stroke="#0000ff" stroke-width="0.3" >BC547B</text>
<polyline points="686,94 686,184 678,184" fill="none" stroke="#ff0000" stroke-width="1.5" stroke-linecap="square"/>
<line x1="678" y1="184" x2="678" y2="193.25" stroke="#1a1a1a" stroke-width="1.5"/>
<polyline points="678,193.25 682.4,195.3 673.6,199.4 682.4,203.5 673.6,207.5 682.4,211.6 673.6,215.7 678,217.75" fill="none" stroke="#1a1a1a" stroke-width="1.4"/>
<line x1="678" y1="217.75" x2="678" y2="227" stroke="#1a1a1a" stroke-width="1.5"/>
<polyline points="678,227 678,275 686,275" fill="none" stroke="#ff0000" stroke-width="1.5" stroke-linecap="square"/>
<line x1="686" y1="275" x2="700" y2="275" stroke="#0000ff" stroke-width="1.5"/>
<text x="684" y="193" fill="#1a1a1a" font-family='"Liberation Sans",sans-serif' font-size="12" font-weight="bold" text-anchor="start" stroke="#1a1a1a" stroke-width="0.3" >R4</text>
<text transform="translate(684.5,197) rotate(90)" fill="#1a1a1a" font-family='"Liberation Sans",sans-serif' font-size="12" font-weight="bold" stroke="#1a1a1a" stroke-width="0.3">4.7kΩ</text>
<path d="M774.5 127.5 L777 124.5 L779.5 127.5 Z" fill="#ff0000"/>
<line x1="777" y1="127" x2="777" y2="136" stroke="#ff0000" stroke-width="1.5"/>
<line x1="777" y1="136" x2="777" y2="185" stroke="#0000ff" stroke-width="1.5"/>
<path d="M769 154 L785 154 L777 165 Z" fill="#0000ff"/>
<line x1="769" y1="166" x2="785" y2="166" stroke="#0000ff" stroke-width="1.6"/>
<line x1="789" y1="153" x2="799" y2="162" stroke="#0000ff" stroke-width="1.2"/>
<path d="M799 162 L792 161 L798 155 Z" fill="none" stroke="#0000ff" stroke-width="1.1"/>
<line x1="787" y1="163" x2="797" y2="172" stroke="#0000ff" stroke-width="1.2"/>
<path d="M797 172 L790 171 L796 165 Z" fill="none" stroke="#0000ff" stroke-width="1.1"/>
<text x="801" y="148" fill="#0000ff" font-family='"Liberation Sans",sans-serif' font-size="12" font-weight="bold" text-anchor="start" stroke="#0000ff" stroke-width="0.3" >LED3</text>
<line x1="777" y1="185" x2="777" y2="184" stroke="#ff0000" stroke-width="1.5"/>
<line x1="777" y1="184" x2="777" y2="193.25" stroke="#1a1a1a" stroke-width="1.5"/>
<polyline points="777,193.25 781.4,195.3 772.6,199.4 781.4,203.5 772.6,207.5 781.4,211.6 772.6,215.7 777,217.75" fill="none" stroke="#1a1a1a" stroke-width="1.4"/>
<line x1="777" y1="217.75" x2="777" y2="227" stroke="#1a1a1a" stroke-width="1.5"/>
<line x1="777" y1="227" x2="777" y2="242" stroke="#ff0000" stroke-width="1.5"/>
<line x1="777" y1="242" x2="777" y2="264" stroke="#0000ff" stroke-width="1.5"/>
<text x="783" y="192" fill="#1a1a1a" font-family='"Liberation Sans",sans-serif' font-size="12" font-weight="bold" text-anchor="start" stroke="#1a1a1a" stroke-width="0.3" >R7</text>
<text transform="translate(786,195) rotate(90)" fill="#1a1a1a" font-family='"Liberation Sans",sans-serif' font-size="12" font-weight="bold" stroke="#1a1a1a" stroke-width="0.3">470Ω</text>
<line x1="766" y1="263" x2="766" y2="285" stroke="#0000ff" stroke-width="1.7"/>
<line x1="766" y1="269" x2="777" y2="264" stroke="#0000ff" stroke-width="1.5"/>
<line x1="767" y1="280" x2="777" y2="285" stroke="#0000ff" stroke-width="1.5"/>
<path d="M777 285 L771 284 L775 279 Z" fill="#0000ff"/>
<line x1="777" y1="285" x2="777" y2="307" stroke="#0000ff" stroke-width="1.5"/>
<polyline points="777,307 753,307 753,316" fill="none" stroke="#ff0000" stroke-width="1.5" stroke-linecap="square"/>
<text x="779" y="252" fill="#0000ff" font-family='"Liberation Sans",sans-serif' font-size="12" font-weight="bold" text-anchor="start" stroke="#0000ff" stroke-width="0.3" >Q2</text>
<text x="779" y="303" fill="#0000ff" font-family='"Liberation Sans",sans-serif' font-size="12" font-weight="bold" text-anchor="start" stroke="#0000ff" stroke-width="0.3" >BC547B</text>
<polyline points="752,94 752,193 744,193" fill="none" stroke="#ff0000" stroke-width="1.5" stroke-linecap="square"/>
<line x1="744" y1="193" x2="744" y2="201.75" stroke="#1a1a1a" stroke-width="1.5"/>
<polyline points="744,201.75 748.4,203.8 739.6,207.9 748.4,212.0 739.6,216.0 748.4,220.1 739.6,224.2 744,226.25" fill="none" stroke="#1a1a1a" stroke-width="1.4"/>
<line x1="744" y1="226.25" x2="744" y2="235" stroke="#1a1a1a" stroke-width="1.5"/>
<polyline points="744,235 744,275 752,275" fill="none" stroke="#ff0000" stroke-width="1.5" stroke-linecap="square"/>
<line x1="752" y1="275" x2="766" y2="275" stroke="#0000ff" stroke-width="1.5"/>
<text x="750" y="202" fill="#1a1a1a" font-family='"Liberation Sans",sans-serif' font-size="12" font-weight="bold" text-anchor="start" stroke="#1a1a1a" stroke-width="0.3" >R8</text>
<text transform="translate(750.5,206) rotate(90)" fill="#1a1a1a" font-family='"Liberation Sans",sans-serif' font-size="12" font-weight="bold" stroke="#1a1a1a" stroke-width="0.3">4.7kΩ</text>
<path d="M840.5 127.5 L843 124.5 L845.5 127.5 Z" fill="#ff0000"/>
<line x1="843" y1="127" x2="843" y2="136" stroke="#ff0000" stroke-width="1.5"/>
<line x1="843" y1="136" x2="843" y2="185" stroke="#0000ff" stroke-width="1.5"/>
<path d="M835 154 L851 154 L843 165 Z" fill="#0000ff"/>
<line x1="835" y1="166" x2="851" y2="166" stroke="#0000ff" stroke-width="1.6"/>
<line x1="855" y1="153" x2="865" y2="162" stroke="#0000ff" stroke-width="1.2"/>
<path d="M865 162 L858 161 L864 155 Z" fill="none" stroke="#0000ff" stroke-width="1.1"/>
<line x1="853" y1="163" x2="863" y2="172" stroke="#0000ff" stroke-width="1.2"/>
<path d="M863 172 L856 171 L862 165 Z" fill="none" stroke="#0000ff" stroke-width="1.1"/>
<text x="867" y="148" fill="#0000ff" font-family='"Liberation Sans",sans-serif' font-size="12" font-weight="bold" text-anchor="start" stroke="#0000ff" stroke-width="0.3" >LED5</text>
<line x1="843" y1="185" x2="843" y2="184" stroke="#ff0000" stroke-width="1.5"/>
<line x1="843" y1="184" x2="843" y2="193.25" stroke="#1a1a1a" stroke-width="1.5"/>
<polyline points="843,193.25 847.4,195.3 838.6,199.4 847.4,203.5 838.6,207.5 847.4,211.6 838.6,215.7 843,217.75" fill="none" stroke="#1a1a1a" stroke-width="1.4"/>
<line x1="843" y1="217.75" x2="843" y2="227" stroke="#1a1a1a" stroke-width="1.5"/>
<line x1="843" y1="227" x2="843" y2="242" stroke="#ff0000" stroke-width="1.5"/>
<line x1="843" y1="242" x2="843" y2="264" stroke="#0000ff" stroke-width="1.5"/>
<text x="849" y="192" fill="#1a1a1a" font-family='"Liberation Sans",sans-serif' font-size="12" font-weight="bold" text-anchor="start" stroke="#1a1a1a" stroke-width="0.3" >R9</text>
<text transform="translate(852,195) rotate(90)" fill="#1a1a1a" font-family='"Liberation Sans",sans-serif' font-size="12" font-weight="bold" stroke="#1a1a1a" stroke-width="0.3">470Ω</text>
<line x1="832" y1="263" x2="832" y2="285" stroke="#0000ff" stroke-width="1.7"/>
<line x1="832" y1="269" x2="843" y2="264" stroke="#0000ff" stroke-width="1.5"/>
<line x1="833" y1="280" x2="843" y2="285" stroke="#0000ff" stroke-width="1.5"/>
<path d="M843 285 L837 284 L841 279 Z" fill="#0000ff"/>
<line x1="843" y1="285" x2="843" y2="307" stroke="#0000ff" stroke-width="1.5"/>
<polyline points="843,307 819,307 819,316" fill="none" stroke="#ff0000" stroke-width="1.5" stroke-linecap="square"/>
<text x="845" y="252" fill="#0000ff" font-family='"Liberation Sans",sans-serif' font-size="12" font-weight="bold" text-anchor="start" stroke="#0000ff" stroke-width="0.3" >Q3</text>
<text x="845" y="303" fill="#0000ff" font-family='"Liberation Sans",sans-serif' font-size="12" font-weight="bold" text-anchor="start" stroke="#0000ff" stroke-width="0.3" >BC547B</text>
<polyline points="818,94 818,184 810,184" fill="none" stroke="#ff0000" stroke-width="1.5" stroke-linecap="square"/>
<line x1="810" y1="184" x2="810" y2="193.25" stroke="#1a1a1a" stroke-width="1.5"/>
<polyline points="810,193.25 814.4,195.3 805.6,199.4 814.4,203.5 805.6,207.5 814.4,211.6 805.6,215.7 810,217.75" fill="none" stroke="#1a1a1a" stroke-width="1.4"/>
<line x1="810" y1="217.75" x2="810" y2="227" stroke="#1a1a1a" stroke-width="1.5"/>
<polyline points="810,227 810,275 818,275" fill="none" stroke="#ff0000" stroke-width="1.5" stroke-linecap="square"/>
<line x1="818" y1="275" x2="832" y2="275" stroke="#0000ff" stroke-width="1.5"/>
<text x="816" y="193" fill="#1a1a1a" font-family='"Liberation Sans",sans-serif' font-size="12" font-weight="bold" text-anchor="start" stroke="#1a1a1a" stroke-width="0.3" >R10</text>
<text transform="translate(816.5,197) rotate(90)" fill="#1a1a1a" font-family='"Liberation Sans",sans-serif' font-size="12" font-weight="bold" stroke="#1a1a1a" stroke-width="0.3">4.7kΩ</text>
<path d="M905.5 127.5 L908 124.5 L910.5 127.5 Z" fill="#ff0000"/>
<line x1="908" y1="127" x2="908" y2="136" stroke="#ff0000" stroke-width="1.5"/>
<line x1="908" y1="136" x2="908" y2="185" stroke="#0000ff" stroke-width="1.5"/>
<path d="M900 154 L916 154 L908 165 Z" fill="#0000ff"/>
<line x1="900" y1="166" x2="916" y2="166" stroke="#0000ff" stroke-width="1.6"/>
<line x1="920" y1="153" x2="930" y2="162" stroke="#0000ff" stroke-width="1.2"/>
<path d="M930 162 L923 161 L929 155 Z" fill="none" stroke="#0000ff" stroke-width="1.1"/>
<line x1="918" y1="163" x2="928" y2="172" stroke="#0000ff" stroke-width="1.2"/>
<path d="M928 172 L921 171 L927 165 Z" fill="none" stroke="#0000ff" stroke-width="1.1"/>
<text x="932" y="148" fill="#0000ff" font-family='"Liberation Sans",sans-serif' font-size="12" font-weight="bold" text-anchor="start" stroke="#0000ff" stroke-width="0.3" >LED6</text>
<line x1="908" y1="185" x2="908" y2="184" stroke="#ff0000" stroke-width="1.5"/>
<line x1="908" y1="184" x2="908" y2="193.25" stroke="#1a1a1a" stroke-width="1.5"/>
<polyline points="908,193.25 912.4,195.3 903.6,199.4 912.4,203.5 903.6,207.5 912.4,211.6 903.6,215.7 908,217.75" fill="none" stroke="#1a1a1a" stroke-width="1.4"/>
<line x1="908" y1="217.75" x2="908" y2="227" stroke="#1a1a1a" stroke-width="1.5"/>
<line x1="908" y1="227" x2="908" y2="242" stroke="#ff0000" stroke-width="1.5"/>
<line x1="908" y1="242" x2="908" y2="264" stroke="#0000ff" stroke-width="1.5"/>
<text x="914" y="192" fill="#1a1a1a" font-family='"Liberation Sans",sans-serif' font-size="12" font-weight="bold" text-anchor="start" stroke="#1a1a1a" stroke-width="0.3" >R11</text>
<text transform="translate(917,195) rotate(90)" fill="#1a1a1a" font-family='"Liberation Sans",sans-serif' font-size="12" font-weight="bold" stroke="#1a1a1a" stroke-width="0.3">470Ω</text>
<line x1="897" y1="263" x2="897" y2="285" stroke="#0000ff" stroke-width="1.7"/>
<line x1="897" y1="269" x2="908" y2="264" stroke="#0000ff" stroke-width="1.5"/>
<line x1="898" y1="280" x2="908" y2="285" stroke="#0000ff" stroke-width="1.5"/>
<path d="M908 285 L902 284 L906 279 Z" fill="#0000ff"/>
<line x1="908" y1="285" x2="908" y2="307" stroke="#0000ff" stroke-width="1.5"/>
<polyline points="908,307 884,307 884,316" fill="none" stroke="#ff0000" stroke-width="1.5" stroke-linecap="square"/>
<text x="910" y="252" fill="#0000ff" font-family='"Liberation Sans",sans-serif' font-size="12" font-weight="bold" text-anchor="start" stroke="#0000ff" stroke-width="0.3" >Q6</text>
<text x="910" y="303" fill="#0000ff" font-family='"Liberation Sans",sans-serif' font-size="12" font-weight="bold" text-anchor="start" stroke="#0000ff" stroke-width="0.3" >BC547B</text>
<polyline points="884,94 884,184 876,184" fill="none" stroke="#ff0000" stroke-width="1.5" stroke-linecap="square"/>
<line x1="876" y1="184" x2="876" y2="193.25" stroke="#1a1a1a" stroke-width="1.5"/>
<polyline points="876,193.25 880.4,195.3 871.6,199.4 880.4,203.5 871.6,207.5 880.4,211.6 871.6,215.7 876,217.75" fill="none" stroke="#1a1a1a" stroke-width="1.4"/>
<line x1="876" y1="217.75" x2="876" y2="227" stroke="#1a1a1a" stroke-width="1.5"/>
<polyline points="876,227 876,275 883,275" fill="none" stroke="#ff0000" stroke-width="1.5" stroke-linecap="square"/>
<line x1="883" y1="275" x2="897" y2="275" stroke="#0000ff" stroke-width="1.5"/>
<text x="882" y="193" fill="#1a1a1a" font-family='"Liberation Sans",sans-serif' font-size="12" font-weight="bold" text-anchor="start" stroke="#1a1a1a" stroke-width="0.3" >R12</text>
<text transform="translate(882.5,197) rotate(90)" fill="#1a1a1a" font-family='"Liberation Sans",sans-serif' font-size="12" font-weight="bold" stroke="#1a1a1a" stroke-width="0.3">4.7kΩ</text>
<path d="M971.5 127.5 L974 124.5 L976.5 127.5 Z" fill="#ff0000"/>
<line x1="974" y1="127" x2="974" y2="136" stroke="#ff0000" stroke-width="1.5"/>
<line x1="974" y1="136" x2="974" y2="185" stroke="#0000ff" stroke-width="1.5"/>
<path d="M966 154 L982 154 L974 165 Z" fill="#0000ff"/>
<line x1="966" y1="166" x2="982" y2="166" stroke="#0000ff" stroke-width="1.6"/>
<line x1="986" y1="153" x2="996" y2="162" stroke="#0000ff" stroke-width="1.2"/>
<path d="M996 162 L989 161 L995 155 Z" fill="none" stroke="#0000ff" stroke-width="1.1"/>
<line x1="984" y1="163" x2="994" y2="172" stroke="#0000ff" stroke-width="1.2"/>
<path d="M994 172 L987 171 L993 165 Z" fill="none" stroke="#0000ff" stroke-width="1.1"/>
<text x="998" y="148" fill="#0000ff" font-family='"Liberation Sans",sans-serif' font-size="12" font-weight="bold" text-anchor="start" stroke="#0000ff" stroke-width="0.3" >LED7</text>
<line x1="974" y1="185" x2="974" y2="193" stroke="#ff0000" stroke-width="1.5"/>
<line x1="974" y1="193" x2="974" y2="201.75" stroke="#1a1a1a" stroke-width="1.5"/>
<polyline points="974,201.75 978.4,203.8 969.6,207.9 978.4,212.0 969.6,216.0 978.4,220.1 969.6,224.2 974,226.25" fill="none" stroke="#1a1a1a" stroke-width="1.4"/>
<line x1="974" y1="226.25" x2="974" y2="235" stroke="#1a1a1a" stroke-width="1.5"/>
<line x1="974" y1="235" x2="974" y2="242" stroke="#ff0000" stroke-width="1.5"/>
<line x1="974" y1="242" x2="974" y2="264" stroke="#0000ff" stroke-width="1.5"/>
<text x="980" y="201" fill="#1a1a1a" font-family='"Liberation Sans",sans-serif' font-size="12" font-weight="bold" text-anchor="start" stroke="#1a1a1a" stroke-width="0.3" >R13</text>
<text transform="translate(983,204) rotate(90)" fill="#1a1a1a" font-family='"Liberation Sans",sans-serif' font-size="12" font-weight="bold" stroke="#1a1a1a" stroke-width="0.3">470Ω</text>
<line x1="963" y1="263" x2="963" y2="285" stroke="#0000ff" stroke-width="1.7"/>
<line x1="963" y1="269" x2="974" y2="264" stroke="#0000ff" stroke-width="1.5"/>
<line x1="964" y1="280" x2="974" y2="285" stroke="#0000ff" stroke-width="1.5"/>
<path d="M974 285 L968 284 L972 279 Z" fill="#0000ff"/>
<line x1="974" y1="285" x2="974" y2="307" stroke="#0000ff" stroke-width="1.5"/>
<line x1="974" y1="307" x2="974" y2="316" stroke="#ff0000" stroke-width="1.5"/>
<text x="976" y="252" fill="#0000ff" font-family='"Liberation Sans",sans-serif' font-size="12" font-weight="bold" text-anchor="start" stroke="#0000ff" stroke-width="0.3" >Q7</text>
<text x="976" y="303" fill="#0000ff" font-family='"Liberation Sans",sans-serif' font-size="12" font-weight="bold" text-anchor="start" stroke="#0000ff" stroke-width="0.3" >BC547B</text>
<polyline points="950,94 950,184 941,184" fill="none" stroke="#ff0000" stroke-width="1.5" stroke-linecap="square"/>
<line x1="941" y1="184" x2="941" y2="193.25" stroke="#1a1a1a" stroke-width="1.5"/>
<polyline points="941,193.25 945.4,195.3 936.6,199.4 945.4,203.5 936.6,207.5 945.4,211.6 936.6,215.7 941,217.75" fill="none" stroke="#1a1a1a" stroke-width="1.4"/>
<line x1="941" y1="217.75" x2="941" y2="227" stroke="#1a1a1a" stroke-width="1.5"/>
<polyline points="941,227 941,275 949,275" fill="none" stroke="#ff0000" stroke-width="1.5" stroke-linecap="square"/>
<line x1="949" y1="275" x2="963" y2="275" stroke="#0000ff" stroke-width="1.5"/>
<text x="947" y="193" fill="#1a1a1a" font-family='"Liberation Sans",sans-serif' font-size="12" font-weight="bold" text-anchor="start" stroke="#1a1a1a" stroke-width="0.3" >R14</text>
<text transform="translate(947.5,197) rotate(90)" fill="#1a1a1a" font-family='"Liberation Sans",sans-serif' font-size="12" font-weight="bold" stroke="#1a1a1a" stroke-width="0.3">4.7kΩ</text>
<path d="M1037.5 127.5 L1040 124.5 L1042.5 127.5 Z" fill="#ff0000"/>
<line x1="1040" y1="127" x2="1040" y2="136" stroke="#ff0000" stroke-width="1.5"/>
<line x1="1040" y1="136" x2="1040" y2="185" stroke="#0000ff" stroke-width="1.5"/>
<path d="M1032 154 L1048 154 L1040 165 Z" fill="#0000ff"/>
<line x1="1032" y1="166" x2="1048" y2="166" stroke="#0000ff" stroke-width="1.6"/>
<line x1="1052" y1="153" x2="1062" y2="162" stroke="#0000ff" stroke-width="1.2"/>
<path d="M1062 162 L1055 161 L1061 155 Z" fill="none" stroke="#0000ff" stroke-width="1.1"/>
<line x1="1050" y1="163" x2="1060" y2="172" stroke="#0000ff" stroke-width="1.2"/>
<path d="M1060 172 L1053 171 L1059 165 Z" fill="none" stroke="#0000ff" stroke-width="1.1"/>
<text x="1064" y="148" fill="#0000ff" font-family='"Liberation Sans",sans-serif' font-size="12" font-weight="bold" text-anchor="start" stroke="#0000ff" stroke-width="0.3" >LED8</text>
<line x1="1040" y1="185" x2="1040" y2="193" stroke="#ff0000" stroke-width="1.5"/>
<line x1="1040" y1="193" x2="1040" y2="201.75" stroke="#1a1a1a" stroke-width="1.5"/>
<polyline points="1040,201.75 1044.4,203.8 1035.6,207.9 1044.4,212.0 1035.6,216.0 1044.4,220.1 1035.6,224.2 1040,226.25" fill="none" stroke="#1a1a1a" stroke-width="1.4"/>
<line x1="1040" y1="226.25" x2="1040" y2="235" stroke="#1a1a1a" stroke-width="1.5"/>
<line x1="1040" y1="235" x2="1040" y2="242" stroke="#ff0000" stroke-width="1.5"/>
<line x1="1040" y1="242" x2="1040" y2="264" stroke="#0000ff" stroke-width="1.5"/>
<text x="1046" y="201" fill="#1a1a1a" font-family='"Liberation Sans",sans-serif' font-size="12" font-weight="bold" text-anchor="start" stroke="#1a1a1a" stroke-width="0.3" >R15</text>
<text transform="translate(1049,204) rotate(90)" fill="#1a1a1a" font-family='"Liberation Sans",sans-serif' font-size="12" font-weight="bold" stroke="#1a1a1a" stroke-width="0.3">470Ω</text>
<line x1="1029" y1="263" x2="1029" y2="285" stroke="#0000ff" stroke-width="1.7"/>
<line x1="1029" y1="269" x2="1040" y2="264" stroke="#0000ff" stroke-width="1.5"/>
<line x1="1030" y1="280" x2="1040" y2="285" stroke="#0000ff" stroke-width="1.5"/>
<path d="M1040 285 L1034 284 L1038 279 Z" fill="#0000ff"/>
<line x1="1040" y1="285" x2="1040" y2="307" stroke="#0000ff" stroke-width="1.5"/>
<line x1="1040" y1="307" x2="1040" y2="316" stroke="#ff0000" stroke-width="1.5"/>
<text x="1042" y="252" fill="#0000ff" font-family='"Liberation Sans",sans-serif' font-size="12" font-weight="bold" text-anchor="start" stroke="#0000ff" stroke-width="0.3" >Q8</text>
<text x="1042" y="303" fill="#0000ff" font-family='"Liberation Sans",sans-serif' font-size="12" font-weight="bold" text-anchor="start" stroke="#0000ff" stroke-width="0.3" >BC547B</text>
<polyline points="1016,94 1016,184 1007,184" fill="none" stroke="#ff0000" stroke-width="1.5" stroke-linecap="square"/>
<line x1="1007" y1="184" x2="1007" y2="193.25" stroke="#1a1a1a" stroke-width="1.5"/>
<polyline points="1007,193.25 1011.4,195.3 1002.6,199.4 1011.4,203.5 1002.6,207.5 1011.4,211.6 1002.6,215.7 1007,217.75" fill="none" stroke="#1a1a1a" stroke-width="1.4"/>
<line x1="1007" y1="217.75" x2="1007" y2="227" stroke="#1a1a1a" stroke-width="1.5"/>
<polyline points="1007,227 1007,275 1015,275" fill="none" stroke="#ff0000" stroke-width="1.5" stroke-linecap="square"/>
<line x1="1015" y1="275" x2="1029" y2="275" stroke="#0000ff" stroke-width="1.5"/>
<text x="1013" y="193" fill="#1a1a1a" font-family='"Liberation Sans",sans-serif' font-size="12" font-weight="bold" text-anchor="start" stroke="#1a1a1a" stroke-width="0.3" >R16</text>
<text transform="translate(1013.5,197) rotate(90)" fill="#1a1a1a" font-family='"Liberation Sans",sans-serif' font-size="12" font-weight="bold" stroke="#1a1a1a" stroke-width="0.3">4.7kΩ</text>
<path d="M1103.5 127.5 L1106 124.5 L1108.5 127.5 Z" fill="#ff0000"/>
<line x1="1106" y1="127" x2="1106" y2="136" stroke="#ff0000" stroke-width="1.5"/>
<line x1="1106" y1="136" x2="1106" y2="185" stroke="#0000ff" stroke-width="1.5"/>
<path d="M1098 154 L1114 154 L1106 165 Z" fill="#0000ff"/>
<line x1="1098" y1="166" x2="1114" y2="166" stroke="#0000ff" stroke-width="1.6"/>
<line x1="1118" y1="153" x2="1128" y2="162" stroke="#0000ff" stroke-width="1.2"/>
<path d="M1128 162 L1121 161 L1127 155 Z" fill="none" stroke="#0000ff" stroke-width="1.1"/>
<line x1="1116" y1="163" x2="1126" y2="172" stroke="#0000ff" stroke-width="1.2"/>
<path d="M1126 172 L1119 171 L1125 165 Z" fill="none" stroke="#0000ff" stroke-width="1.1"/>
<text x="1130" y="148" fill="#0000ff" font-family='"Liberation Sans",sans-serif' font-size="12" font-weight="bold" text-anchor="start" stroke="#0000ff" stroke-width="0.3" >LED4</text>
<line x1="1106" y1="185" x2="1106" y2="193" stroke="#ff0000" stroke-width="1.5"/>
<line x1="1106" y1="193" x2="1106" y2="201.75" stroke="#1a1a1a" stroke-width="1.5"/>
<polyline points="1106,201.75 1110.4,203.8 1101.6,207.9 1110.4,212.0 1101.6,216.0 1110.4,220.1 1101.6,224.2 1106,226.25" fill="none" stroke="#1a1a1a" stroke-width="1.4"/>
<line x1="1106" y1="226.25" x2="1106" y2="235" stroke="#1a1a1a" stroke-width="1.5"/>
<line x1="1106" y1="235" x2="1106" y2="242" stroke="#ff0000" stroke-width="1.5"/>
<line x1="1106" y1="242" x2="1106" y2="264" stroke="#0000ff" stroke-width="1.5"/>
<text x="1112" y="201" fill="#1a1a1a" font-family='"Liberation Sans",sans-serif' font-size="12" font-weight="bold" text-anchor="start" stroke="#1a1a1a" stroke-width="0.3" >R6</text>
<text transform="translate(1115,204) rotate(90)" fill="#1a1a1a" font-family='"Liberation Sans",sans-serif' font-size="12" font-weight="bold" stroke="#1a1a1a" stroke-width="0.3">470Ω</text>
<line x1="1095" y1="263" x2="1095" y2="285" stroke="#0000ff" stroke-width="1.7"/>
<line x1="1095" y1="269" x2="1106" y2="264" stroke="#0000ff" stroke-width="1.5"/>
<line x1="1096" y1="280" x2="1106" y2="285" stroke="#0000ff" stroke-width="1.5"/>
<path d="M1106 285 L1100 284 L1104 279 Z" fill="#0000ff"/>
<line x1="1106" y1="285" x2="1106" y2="307" stroke="#0000ff" stroke-width="1.5"/>
<line x1="1106" y1="307" x2="1106" y2="316" stroke="#ff0000" stroke-width="1.5"/>
<text x="1108" y="252" fill="#0000ff" font-family='"Liberation Sans",sans-serif' font-size="12" font-weight="bold" text-anchor="start" stroke="#0000ff" stroke-width="0.3" >Q4</text>
<text x="1108" y="303" fill="#0000ff" font-family='"Liberation Sans",sans-serif' font-size="12" font-weight="bold" text-anchor="start" stroke="#0000ff" stroke-width="0.3" >BC547B</text>
<polyline points="1082,94 1082,103 1073,103 1073,184" fill="none" stroke="#ff0000" stroke-width="1.5" stroke-linecap="square"/>
<line x1="1073" y1="184" x2="1073" y2="193.25" stroke="#1a1a1a" stroke-width="1.5"/>
<polyline points="1073,193.25 1077.4,195.3 1068.6,199.4 1077.4,203.5 1068.6,207.5 1077.4,211.6 1068.6,215.7 1073,217.75" fill="none" stroke="#1a1a1a" stroke-width="1.4"/>
<line x1="1073" y1="217.75" x2="1073" y2="227" stroke="#1a1a1a" stroke-width="1.5"/>
<polyline points="1073,227 1073,275 1081,275" fill="none" stroke="#ff0000" stroke-width="1.5" stroke-linecap="square"/>
<line x1="1081" y1="275" x2="1095" y2="275" stroke="#0000ff" stroke-width="1.5"/>
<text x="1079" y="193" fill="#1a1a1a" font-family='"Liberation Sans",sans-serif' font-size="12" font-weight="bold" text-anchor="start" stroke="#1a1a1a" stroke-width="0.3" >R5</text>
<text transform="translate(1079.5,197) rotate(90)" fill="#1a1a1a" font-family='"Liberation Sans",sans-serif' font-size="12" font-weight="bold" stroke="#1a1a1a" stroke-width="0.3">4.7kΩ</text>
<line x1="1180" y1="127" x2="1180" y2="136" stroke="#ff0000" stroke-width="1.5"/>
<line x1="1180" y1="136" x2="1180" y2="185" stroke="#0000ff" stroke-width="1.5"/>
<path d="M1172 154 L1188 154 L1180 165 Z" fill="#0000ff"/>
<line x1="1172" y1="166" x2="1188" y2="166" stroke="#0000ff" stroke-width="1.6"/>
<line x1="1192" y1="153" x2="1202" y2="162" stroke="#0000ff" stroke-width="1.2"/>
<path d="M1202 162 L1195 161 L1201 155 Z" fill="none" stroke="#0000ff" stroke-width="1.1"/>
<line x1="1190" y1="163" x2="1200" y2="172" stroke="#0000ff" stroke-width="1.2"/>
<path d="M1200 172 L1193 171 L1199 165 Z" fill="none" stroke="#0000ff" stroke-width="1.1"/>
<text x="1204" y="148" fill="#0000ff" font-family='"Liberation Sans",sans-serif' font-size="12" font-weight="bold" text-anchor="start" stroke="#0000ff" stroke-width="0.3" >LED9</text>
<line x1="1180" y1="185" x2="1180" y2="193" stroke="#ff0000" stroke-width="1.5"/>
<line x1="1180" y1="193" x2="1180" y2="201.75" stroke="#1a1a1a" stroke-width="1.5"/>
<polyline points="1180,201.75 1184.4,203.8 1175.6,207.9 1184.4,212.0 1175.6,216.0 1184.4,220.1 1175.6,224.2 1180,226.25" fill="none" stroke="#1a1a1a" stroke-width="1.4"/>
<line x1="1180" y1="226.25" x2="1180" y2="235" stroke="#1a1a1a" stroke-width="1.5"/>
<line x1="1180" y1="235" x2="1180" y2="242" stroke="#ff0000" stroke-width="1.5"/>
<line x1="1180" y1="242" x2="1180" y2="264" stroke="#0000ff" stroke-width="1.5"/>
<text x="1186" y="201" fill="#1a1a1a" font-family='"Liberation Sans",sans-serif' font-size="12" font-weight="bold" text-anchor="start" stroke="#1a1a1a" stroke-width="0.3" >R18</text>
<text transform="translate(1189,204) rotate(90)" fill="#1a1a1a" font-family='"Liberation Sans",sans-serif' font-size="12" font-weight="bold" stroke="#1a1a1a" stroke-width="0.3">470Ω</text>
<line x1="1169" y1="263" x2="1169" y2="285" stroke="#0000ff" stroke-width="1.7"/>
<line x1="1169" y1="269" x2="1180" y2="264" stroke="#0000ff" stroke-width="1.5"/>
<line x1="1170" y1="280" x2="1180" y2="285" stroke="#0000ff" stroke-width="1.5"/>
<path d="M1180 285 L1174 284 L1178 279 Z" fill="#0000ff"/>
<line x1="1180" y1="285" x2="1180" y2="307" stroke="#0000ff" stroke-width="1.5"/>
<line x1="1180" y1="307" x2="1180" y2="316" stroke="#ff0000" stroke-width="1.5"/>
<text x="1182" y="252" fill="#0000ff" font-family='"Liberation Sans",sans-serif' font-size="12" font-weight="bold" text-anchor="start" stroke="#0000ff" stroke-width="0.3" >Q5</text>
<text x="1182" y="303" fill="#0000ff" font-family='"Liberation Sans",sans-serif' font-size="12" font-weight="bold" text-anchor="start" stroke="#0000ff" stroke-width="0.3" >BC547B</text>
<line x1="1147" y1="184" x2="1147" y2="193.25" stroke="#1a1a1a" stroke-width="1.5"/>
<polyline points="1147,193.25 1151.4,195.3 1142.6,199.4 1151.4,203.5 1142.6,207.5 1151.4,211.6 1142.6,215.7 1147,217.75" fill="none" stroke="#1a1a1a" stroke-width="1.4"/>
<line x1="1147" y1="217.75" x2="1147" y2="227" stroke="#1a1a1a" stroke-width="1.5"/>
<polyline points="1147,227 1147,275 1155,275" fill="none" stroke="#ff0000" stroke-width="1.5" stroke-linecap="square"/>
<line x1="1155" y1="275" x2="1169" y2="275" stroke="#0000ff" stroke-width="1.5"/>
<text x="1153" y="193" fill="#1a1a1a" font-family='"Liberation Sans",sans-serif' font-size="12" font-weight="bold" text-anchor="start" stroke="#1a1a1a" stroke-width="0.3" >R17</text>
<text transform="translate(1153.5,197) rotate(90)" fill="#1a1a1a" font-family='"Liberation Sans",sans-serif' font-size="12" font-weight="bold" stroke="#1a1a1a" stroke-width="0.3">4.7kΩ</text>
<line x1="1180" y1="127" x2="1180" y2="136" stroke="#ff0000" stroke-width="1.5"/></svg>
<div class="a" style="left:0;top:722px;width:1242px;height:21px;background:#f0f0f0"></div>
<div class="a" style="left:143px;top:724px;width:430px;height:17px;background:#cdcdcd"></div>
<svg class="a" style="left:0;top:724px" width="14" height="17"><path d="M9 4 L5 8.5 L9 13" stroke="#606060" stroke-width="2" fill="none"/></svg>
<svg class="a" style="left:1232px;top:724px" width="10" height="17"><path d="M5 4 L9 8.5 L5 13" stroke="#606060" stroke-width="2" fill="none"/></svg>
<div class="a" style="left:0;top:743px;width:1242px;height:43px;background:#f0f0f0"></div>
<div class="a" style="left:176px;top:751px;width:1066px;height:1px;background:#555"></div>
<div class="a" style="left:-4px;top:751px;width:82px;height:27px;background:#f0f0f0;border:1px solid #333;border-top:none;border-left:none;border-radius:0 0 3px 3px"></div>
<div class="a" style="left:79px;top:751px;width:98px;height:28px;background:#f0f0f0;border:1px solid #333;border-top:none;border-radius:0 0 3px 3px"></div>
<div class="t" style="left:22px;top:756px;font-size:14px">Design1</div>
<div class="t" style="left:108px;top:758px;font-size:14px">kivmero *</div>
<svg class="a" style="left:1px;top:755px" width="18" height="19"><path d="M1 1 H11 L16 6 V18 H1 Z" fill="#fff" stroke="#222"/><path d="M4 4 V15 M4 9 H8 M8 6 L11 8 L8 10Z M6 13 L9 16 M9 13 L6 16" stroke="#e00" stroke-width="1.5" fill="none"/></svg>
<svg class="a" style="left:84px;top:756px" width="18" height="19"><path d="M1 1 H11 L16 6 V18 H1 Z" fill="#fff" stroke="#222"/><path d="M4 4 V15 M4 9 H8 M8 6 L11 8 L8 10Z M6 13 L9 16 M9 13 L6 16" stroke="#e00" stroke-width="1.5" fill="none"/></svg>
<div class="a" style="left:0;top:785px;width:1242px;height:1px;background:#6a6a6a"></div>
<div class="a" style="left:0;top:786px;width:1242px;height:8px;background:#f0f0f0"></div>
<div class="a" style="left:0;top:794px;width:1242px;height:2px;background:#8a8a8a"></div>
<div class="t" style="left:2px;top:801px;font-size:14px;line-height:16px;letter-spacing:-0.3px">péntek, 8:47:53</div>
<div class="a" style="left:0;top:968px;width:1242px;height:2px;background:#8a8a8a"></div>
<div class="a" style="left:0;top:970px;width:1242px;height:4px;background:#f0f0f0"></div>
<div class="a" style="left:0;top:973px;width:1242px;height:2px;background:#6a6a6a"></div>
<div class="a" style="left:0;top:975px;width:1242px;height:31px;background:#f0f0f0"></div>
<div class="a" style="left:-4px;top:975px;width:73px;height:22px;background:#f0f0f0;border:1px solid #555;border-top:none;border-left:none;border-radius:0 0 3px 3px"></div>
<div class="a" style="left:72px;top:975px;width:72px;height:22px;background:#f0f0f0;border:1px solid #555;border-top:none;border-radius:0 0 3px 3px"></div>
<div class="t" style="left:0;top:978px;font-size:13px">oper layers</div>
<div class="t" style="left:77px;top:978px;font-size:13px">Simulation</div>
<div class="a" style="left:0;top:1005px;width:1242px;height:2px;background:#9a9a9a"></div>
<div class="a" style="left:0;top:1007px;width:1242px;height:17px;background:#f0f0f0"></div>
<div class="t" style="left:790px;top:1012px;font-size:14px">kivmero: Simulating</div>
<div class="t" style="left:1012px;top:1012px;font-size:14px">Tran: 0.472 s</div>
<div class="a" style="left:1236px;top:1014px;width:6px;height:10px;background:#22d822"></div>
<div class="a" style="left:281px;top:377px;width:254px;height:290px;box-shadow:0 3px 12px 1px rgba(0,0,0,0.22);"></div>
<div class="a" style="left:281px;top:377px;width:254px;height:290px;background:#f0f0f0;border:1px solid #a9a9a9"></div>
<div class="a" style="left:282px;top:378px;width:252px;height:36px;background:#fff"></div>
<div class="t" style="left:291px;top:388px;font-size:14px;line-height:16px;color:#8a8a8a">Function generator-XFG1</div>
<svg class="a" style="left:508px;top:388px" width="14" height="14"><path d="M1 1 L13 13 M13 1 L1 13" stroke="#777" stroke-width="1.2"/></svg>
<div class="grp" style="left:286px;top:424px;width:242px;height:188px"></div>
<div class="a" style="left:286px;top:467px;width:242px;height:1px;background:#dcdcdc"></div>
<div class="gl" style="left:294px;top:418px;font-size:13px">Waveforms</div>
<div class="gl" style="left:294px;top:461px;font-size:13px">Signal options</div>
<div class="btn sel" style="left:299px;top:436px;width:70px;height:20px;border-width:1px;border-color:#0060b0"></div>
<div class="btn" style="left:374px;top:436px;width:71px;height:20px"></div>
<div class="btn" style="left:449px;top:436px;width:70px;height:20px"></div>
<svg class="a" style="left:0;top:0" width="540" height="470"><path d="M307 446.8 C311 442 316 442.5 320 443 C326 444 329 449 334 449 C339 449 344 442.7 351.5 442.7 C356 442.7 360 444 362 446.8" stroke="#222" stroke-width="1.3" fill="none"/><path d="M381 449.6 L393 442.7 L405 449 L417 442.7 L428 449 L436.7 445" stroke="#222" stroke-width="1.2" fill="none"/><path d="M456 449.3 H467.2 V443 H478.3 V449.3 H487.6 V443 H498.7 V449.3 H510.7" stroke="#111" stroke-width="1.3" fill="none"/></svg>
<div class="t" style="left:299px;top:483px;font-size:13px;line-height:15px">Frequency:</div>
<div class="inp" style="left:378px;top:479px;width:92px;height:24px;line-height:21px;font-size:13px;padding-left:6px;border-width:1px 2px 2px 1px;border-color:#707070">60</div>
<div class="inp" style="left:469px;top:479px;width:54px;height:24px;line-height:21px;font-size:13px;padding-left:8px;border-width:1px 2px 2px 1px;border-color:#707070">Hz</div>
<div class="t" style="left:299px;top:508px;font-size:13px;line-height:15px">Duty cycle:</div>
<div class="inp" style="left:378px;top:504px;width:91px;height:23px;line-height:21px;font-size:13px;padding-left:6px;background:#e9e9e9;border-color:#dedede;color:#8a8a8a">50</div>
<div class="inp" style="left:469px;top:504px;width:54px;height:23px;line-height:21px;font-size:13px;padding-left:9px;background:#e9e9e9;border-color:#dedede;color:#8a8a8a">%</div>
<div class="t" style="left:299px;top:531px;font-size:13px;line-height:15px">Amplitude:</div>
<div class="inp" style="left:378px;top:527px;width:92px;height:24px;line-height:21px;font-size:13px;padding-left:6px;border-width:1px 2px 2px 1px;border-color:#707070">730</div>
<div class="inp" style="left:469px;top:527px;width:54px;height:24px;line-height:21px;font-size:13px;padding-left:8px;border-width:1px 2px 2px 1px;border-color:#707070">mVp</div>
<div class="t" style="left:299px;top:555px;font-size:13px;line-height:15px">Offset:</div>
<div class="inp" style="left:378px;top:551px;width:92px;height:24px;line-height:21px;font-size:13px;padding-left:6px;border-width:1px 2px 2px 1px;border-color:#707070">0</div>
<div class="inp" style="left:469px;top:551px;width:54px;height:24px;line-height:21px;font-size:13px;padding-left:8px;border-width:1px 2px 2px 1px;border-color:#707070">V</div>
<div class="btn" style="left:330px;top:582px;width:149px;height:25px;line-height:23px;font-size:13px;background:#cccccc;border-color:#c4c4c4;color:#8c8c8c">Set rise/Fall time</div>
<div class="t" style="left:308px;top:626px;font-size:14px">+</div>
<div class="t" style="left:381px;top:623px;font-size:13px">Common</div>
<div class="a" style="left:494px;top:636px;width:8px;height:1.5px;background:#000"></div>
<div class="radio" style="left:305px;top:638px;width:16px;height:16px;border-color:#d8d8d8"><i style="left:3px;top:3px;width:8px;height:8px"></i></div>
<div class="radio" style="left:391px;top:638px;width:16px;height:16px;border-color:#d8d8d8"><i style="left:3px;top:3px;width:8px;height:8px"></i></div>
<div class="radio" style="left:489px;top:641px;width:16px;height:16px;border-color:#d8d8d8"><i style="left:3px;top:3px;width:8px;height:8px"></i></div>
<svg class="a" style="left:519px;top:651px" width="14" height="14"><g fill="#a0a0a0"><rect x="9" y="1" width="2" height="2"/><rect x="5" y="5" width="2" height="2"/><rect x="9" y="5" width="2" height="2"/><rect x="1" y="9" width="2" height="2"/><rect x="5" y="9" width="2" height="2"/><rect x="9" y="9" width="2" height="2"/></g></svg>
<div class="a" style="left:564px;top:326px;width:673px;height:692px;box-shadow:0 2px 14px 1px rgba(0,0,0,0.22)"></div>
<div class="a" style="left:564px;top:326px;width:673px;height:692px;background:#f0f0f0;border:1px solid #1883d7"></div>
<div class="a" style="left:565px;top:327px;width:671px;height:36px;background:#fff"></div>
<div class="t" style="left:576px;top:336px;font-size:14px;line-height:16px">Oscilloscope-XSC1</div>
<svg class="a" style="left:1210px;top:337px" width="15" height="15"><path d="M1 1 L14 14 M14 1 L1 14" stroke="#111" stroke-width="1.3"/></svg>
<div class="a" style="left:565px;top:363px;width:671px;height:455px;background:#a0a0a0"></div>
<div class="a" style="left:568px;top:366px;width:668px;height:451px;background:#fff"></div>
<div class="a" style="left:565px;top:817px;width:671px;height:1px;background:#6a6a6a"></div>
<svg class="a" style="left:0;top:0" width="1242" height="1024" viewBox="0 0 1242 1024">
<rect x="568" y="366" width="664" height="448" fill="#000"/>
<line x1="643.9" y1="377.5" x2="643.9" y2="805.5" stroke="#d8d8d8" stroke-width="1.3" stroke-dasharray="3.5,3.8"/>
<line x1="708.3" y1="377.5" x2="708.3" y2="805.5" stroke="#d8d8d8" stroke-width="1.3" stroke-dasharray="3.5,3.8"/>
<line x1="772.7" y1="377.5" x2="772.7" y2="805.5" stroke="#d8d8d8" stroke-width="1.3" stroke-dasharray="3.5,3.8"/>
<line x1="837.1" y1="377.5" x2="837.1" y2="805.5" stroke="#d8d8d8" stroke-width="1.3" stroke-dasharray="3.5,3.8"/>
<line x1="901.5" y1="377.5" x2="901.5" y2="805.5" stroke="#d8d8d8" stroke-width="1.3" stroke-dasharray="3.5,3.8"/>
<line x1="965.9" y1="377.5" x2="965.9" y2="805.5" stroke="#d8d8d8" stroke-width="1.3" stroke-dasharray="3.5,3.8"/>
<line x1="1030.3" y1="377.5" x2="1030.3" y2="805.5" stroke="#d8d8d8" stroke-width="1.3" stroke-dasharray="3.5,3.8"/>
<line x1="1094.7" y1="377.5" x2="1094.7" y2="805.5" stroke="#d8d8d8" stroke-width="1.3" stroke-dasharray="3.5,3.8"/>
<line x1="1159.1" y1="377.5" x2="1159.1" y2="805.5" stroke="#d8d8d8" stroke-width="1.3" stroke-dasharray="3.5,3.8"/>
<line x1="579.5" y1="448.8" x2="1223.5" y2="448.8" stroke="#d8d8d8" stroke-width="1.3" stroke-dasharray="4.5,3.5"/>
<line x1="579.5" y1="520.2" x2="1223.5" y2="520.2" stroke="#d8d8d8" stroke-width="1.3" stroke-dasharray="4.5,3.5"/>
<line x1="579.5" y1="662.8" x2="1223.5" y2="662.8" stroke="#d8d8d8" stroke-width="1.3" stroke-dasharray="4.5,3.5"/>
<line x1="579.5" y1="734.2" x2="1223.5" y2="734.2" stroke="#d8d8d8" stroke-width="1.3" stroke-dasharray="4.5,3.5"/>
<line x1="579.5" y1="591.5" x2="1223.5" y2="591.5" stroke="#fff" stroke-width="1.5"/>
<line x1="592.4" y1="590.5" x2="592.4" y2="595.5" stroke="#fff" stroke-width="1.3"/>
<line x1="605.3" y1="590.5" x2="605.3" y2="595.5" stroke="#fff" stroke-width="1.3"/>
<line x1="618.1" y1="590.5" x2="618.1" y2="595.5" stroke="#fff" stroke-width="1.3"/>
<line x1="631.0" y1="590.5" x2="631.0" y2="595.5" stroke="#fff" stroke-width="1.3"/>
<line x1="643.9" y1="590.5" x2="643.9" y2="595.5" stroke="#fff" stroke-width="1.3"/>
<line x1="656.8" y1="590.5" x2="656.8" y2="595.5" stroke="#fff" stroke-width="1.3"/>
<line x1="669.7" y1="590.5" x2="669.7" y2="595.5" stroke="#fff" stroke-width="1.3"/>
<line x1="682.5" y1="590.5" x2="682.5" y2="595.5" stroke="#fff" stroke-width="1.3"/>
<line x1="695.4" y1="590.5" x2="695.4" y2="595.5" stroke="#fff" stroke-width="1.3"/>
<line x1="708.3" y1="590.5" x2="708.3" y2="595.5" stroke="#fff" stroke-width="1.3"/>
<line x1="721.2" y1="590.5" x2="721.2" y2="595.5" stroke="#fff" stroke-width="1.3"/>
<line x1="734.1" y1="590.5" x2="734.1" y2="595.5" stroke="#fff" stroke-width="1.3"/>
<line x1="746.9" y1="590.5" x2="746.9" y2="595.5" stroke="#fff" stroke-width="1.3"/>
<line x1="759.8" y1="590.5" x2="759.8" y2="595.5" stroke="#fff" stroke-width="1.3"/>
<line x1="772.7" y1="590.5" x2="772.7" y2="595.5" stroke="#fff" stroke-width="1.3"/>
<line x1="785.6" y1="590.5" x2="785.6" y2="595.5" stroke="#fff" stroke-width="1.3"/>
<line x1="798.5" y1="590.5" x2="798.5" y2="595.5" stroke="#fff" stroke-width="1.3"/>
<line x1="811.3" y1="590.5" x2="811.3" y2="595.5" stroke="#fff" stroke-width="1.3"/>
<line x1="824.2" y1="590.5" x2="824.2" y2="595.5" stroke="#fff" stroke-width="1.3"/>
<line x1="837.1" y1="590.5" x2="837.1" y2="595.5" stroke="#fff" stroke-width="1.3"/>
<line x1="850.0" y1="590.5" x2="850.0" y2="595.5" stroke="#fff" stroke-width="1.3"/>
<line x1="862.9" y1="590.5" x2="862.9" y2="595.5" stroke="#fff" stroke-width="1.3"/>
<line x1="875.7" y1="590.5" x2="875.7" y2="595.5" stroke="#fff" stroke-width="1.3"/>
<line x1="888.6" y1="590.5" x2="888.6" y2="595.5" stroke="#fff" stroke-width="1.3"/>
<line x1="901.5" y1="590.5" x2="901.5" y2="595.5" stroke="#fff" stroke-width="1.3"/>
<line x1="914.4" y1="590.5" x2="914.4" y2="595.5" stroke="#fff" stroke-width="1.3"/>
<line x1="927.3" y1="590.5" x2="927.3" y2="595.5" stroke="#fff" stroke-width="1.3"/>
<line x1="940.1" y1="590.5" x2="940.1" y2="595.5" stroke="#fff" stroke-width="1.3"/>
<line x1="953.0" y1="590.5" x2="953.0" y2="595.5" stroke="#fff" stroke-width="1.3"/>
<line x1="965.9" y1="590.5" x2="965.9" y2="595.5" stroke="#fff" stroke-width="1.3"/>
<line x1="978.8" y1="590.5" x2="978.8" y2="595.5" stroke="#fff" stroke-width="1.3"/>
<line x1="991.7" y1="590.5" x2="991.7" y2="595.5" stroke="#fff" stroke-width="1.3"/>
<line x1="1004.5" y1="590.5" x2="1004.5" y2="595.5" stroke="#fff" stroke-width="1.3"/>
<line x1="1017.4" y1="590.5" x2="1017.4" y2="595.5" stroke="#fff" stroke-width="1.3"/>
<line x1="1030.3" y1="590.5" x2="1030.3" y2="595.5" stroke="#fff" stroke-width="1.3"/>
<line x1="1043.2" y1="590.5" x2="1043.2" y2="595.5" stroke="#fff" stroke-width="1.3"/>
<line x1="1056.1" y1="590.5" x2="1056.1" y2="595.5" stroke="#fff" stroke-width="1.3"/>
<line x1="1068.9" y1="590.5" x2="1068.9" y2="595.5" stroke="#fff" stroke-width="1.3"/>
<line x1="1081.8" y1="590.5" x2="1081.8" y2="595.5" stroke="#fff" stroke-width="1.3"/>
<line x1="1094.7" y1="590.5" x2="1094.7" y2="595.5" stroke="#fff" stroke-width="1.3"/>
<line x1="1107.6" y1="590.5" x2="1107.6" y2="595.5" stroke="#fff" stroke-width="1.3"/>
<line x1="1120.5" y1="590.5" x2="1120.5" y2="595.5" stroke="#fff" stroke-width="1.3"/>
<line x1="1133.3" y1="590.5" x2="1133.3" y2="595.5" stroke="#fff" stroke-width="1.3"/>
<line x1="1146.2" y1="590.5" x2="1146.2" y2="595.5" stroke="#fff" stroke-width="1.3"/>
<line x1="1159.1" y1="590.5" x2="1159.1" y2="595.5" stroke="#fff" stroke-width="1.3"/>
<line x1="1172.0" y1="590.5" x2="1172.0" y2="595.5" stroke="#fff" stroke-width="1.3"/>
<line x1="1184.9" y1="590.5" x2="1184.9" y2="595.5" stroke="#fff" stroke-width="1.3"/>
<line x1="1197.7" y1="590.5" x2="1197.7" y2="595.5" stroke="#fff" stroke-width="1.3"/>
<line x1="1210.6" y1="590.5" x2="1210.6" y2="595.5" stroke="#fff" stroke-width="1.3"/>
<line x1="901.5" y1="586.5" x2="901.5" y2="597.5" stroke="#fff" stroke-width="1.3"/>
<rect x="579.5" y="377.5" width="644.0" height="428.0" fill="none" stroke="#f4f4f4" stroke-width="1.6"/>
<line x1="579.5" y1="377.5" x2="579.5" y2="805.5" stroke="#00ff00" stroke-width="1.3"/>
<polyline points="580.2,519.7 589.2,519.7 595.6,501.6 602.0,512.6 611.7,517.3 618.8,486.8 619.4,495.2 633.6,501.0 640.7,459.8 655.5,469.4 661.7,433.3 662.3,456.5 676.8,467.5 683.9,434.6 698.0,449.0 704.2,418.5 705.1,442.4 719.9,459.1 726.4,428.2 741.7,446.2 744.3,434.0 747.5,417.2 748.2,436.6 763.6,457.2 768.8,427.5 784.9,448.8 788.1,437.2 790.3,419.8 791.0,436.6 806.2,459.1 812.0,430.8 827.4,453.3 831.3,435.9 833.0,425.6 833.2,438.5 849.3,463.6 854.5,435.9 870.6,459.8 873.8,446.2 876.4,433.3 877.0,460.4 891.7,483.8 894.3,474.1 898.2,458.0 913.6,483.1 916.2,468.3 918.8,455.4 919.4,478.0 934.9,502.4 940.7,476.0 956.2,501.2 960.0,480.5 961.6,474.1 962.0,488.3 978.1,513.4 983.9,487.0 999.3,513.4 1001.9,497.3 1004.5,487.0 1004.5,494.7 1020.6,521.1 1026.4,494.7 1030.0,500.5 1042.2,520.5 1044.8,512.1 1047.4,494.8 1048.0,500.5 1063.5,525.7 1066.1,513.4 1069.3,499.3 1085.4,525.7 1088.0,510.9 1090.5,499.3 1091.2,503.1 1106.7,528.2 1109.2,516.0 1112.4,501.8 1128.6,528.2 1131.1,516.7 1133.1,501.8 1149.8,530.2 1151.7,517.3 1155.6,503.8 1171.1,530.2 1173.6,519.9 1176.2,503.8 1187.8,523.7" fill="none" stroke="#ff0000" stroke-width="1.7" stroke-linejoin="miter"/>
<polyline points="580.0,698.2 581.0,688.7 582.0,680.7 583.0,674.8 584.0,671.5 585.0,671.2 586.0,673.9 587.0,679.3 588.0,686.9 589.0,696.2 590.0,706.3 591.0,716.4 592.0,725.6 593.0,733.1 594.0,738.4 595.0,740.8 596.0,740.3 597.0,736.9 598.0,730.9 599.0,722.7 600.0,713.1 601.0,703.0 602.0,693.0 603.0,684.2 604.0,677.2 605.0,672.7 606.0,671.0 607.0,672.3 608.0,676.4 609.0,683.1 610.0,691.7 611.0,701.5 612.0,711.7 613.0,721.5 614.0,729.9 615.0,736.2 616.0,740.0 617.0,740.9 618.0,738.9 619.0,734.0 620.0,726.8 621.0,717.8 622.0,707.8 623.0,697.6 624.0,688.2 625.0,680.2 626.0,674.5 627.0,671.4 628.0,671.3 629.0,674.1 630.0,679.7 631.0,687.5 632.0,696.8 633.0,706.9 634.0,717.0 635.0,726.1 636.0,733.5 637.0,738.6 638.0,740.9 639.0,740.2 640.0,736.6 641.0,730.4 642.0,722.2 643.0,712.5 644.0,702.3 645.0,692.5 646.0,683.7 647.0,676.9 648.0,672.5 649.0,671.0 650.0,672.5 651.0,676.8 652.0,683.6 653.0,692.3 654.0,702.1 655.0,712.3 656.0,722.0 657.0,730.3 658.0,736.5 659.0,740.2 660.0,740.9 661.0,738.7 662.0,733.7 663.0,726.3 664.0,717.2 665.0,707.2 666.0,697.0 667.0,687.6 668.0,679.8 669.0,674.2 670.0,671.3 671.0,671.4 672.0,674.4 673.0,680.1 674.0,688.0 675.0,697.4 676.0,707.6 677.0,717.6 678.0,726.6 679.0,733.9 680.0,738.8 681.0,740.9 682.0,740.1 683.0,736.3 684.0,730.0 685.0,721.6 686.0,711.9 687.0,701.7 688.0,691.9 689.0,683.3 690.0,676.5 691.0,672.3 692.0,671.0 693.0,672.6 694.0,677.1 695.0,684.0 696.0,692.8 697.0,702.8 698.0,712.9 699.0,722.5 700.0,730.7 701.0,736.8 702.0,740.3 703.0,740.9 704.0,738.4 705.0,733.3 706.0,725.8 707.0,716.6 708.0,706.5 709.0,696.4 710.0,687.1 711.0,679.4 712.0,674.0 713.0,671.3 714.0,671.5 715.0,674.7 716.0,680.5 717.0,688.5 718.0,698.0 719.0,708.2 720.0,718.2 721.0,727.1 722.0,734.3 723.0,739.0 724.0,741.0 725.0,739.9 726.0,736.0 727.0,729.6 728.0,721.1 729.0,711.3 730.0,701.1 731.0,691.3 732.0,682.8 733.0,676.2 734.0,672.2 735.0,671.0 736.0,672.8 737.0,677.5 738.0,684.5 739.0,693.4 740.0,703.4 741.0,713.5 742.0,723.1 743.0,731.2 744.0,737.1 745.0,740.4 746.0,740.8 747.0,738.2 748.0,732.9 749.0,725.3 750.0,716.0 751.0,705.9 752.0,695.8 753.0,686.6 754.0,679.0 755.0,673.7 756.0,671.2 757.0,671.6 758.0,675.0 759.0,680.9 760.0,689.0 761.0,698.6 762.0,708.8 763.0,718.7 764.0,727.6 765.0,734.6 766.0,739.2 767.0,741.0 768.0,739.8 769.0,735.7 770.0,729.1 771.0,720.5 772.0,710.7 773.0,700.5 774.0,690.8 775.0,682.3 776.0,675.9 777.0,672.0 778.0,671.0 779.0,673.0 780.0,677.8 781.0,685.0 782.0,694.0 783.0,704.0 784.0,714.1 785.0,723.6 786.0,731.6 787.0,737.4 788.0,740.5 789.0,740.7 790.0,738.0 791.0,732.5 792.0,724.8 793.0,715.4 794.0,705.3 795.0,695.2 796.0,686.1 797.0,678.6 798.0,673.5 799.0,671.1 800.0,671.7 801.0,675.2 802.0,681.4 803.0,689.6 804.0,699.2 805.0,709.4 806.0,719.3 807.0,728.1 808.0,735.0 809.0,739.4 810.0,741.0 811.0,739.6 812.0,735.4 813.0,728.6 814.0,720.0 815.0,710.1 816.0,699.9 817.0,690.2 818.0,681.9 819.0,675.6 820.0,671.9 821.0,671.1 822.0,673.2 823.0,678.2 824.0,685.5 825.0,694.6 826.0,704.6 827.0,714.7 828.0,724.1 829.0,732.0 830.0,737.7 831.0,740.6 832.0,740.6 833.0,737.7 834.0,732.1 835.0,724.2 836.0,714.8 837.0,704.7 838.0,694.7 839.0,685.6 840.0,678.3 841.0,673.3 842.0,671.1 843.0,671.9 844.0,675.5 845.0,681.8 846.0,690.1 847.0,699.8 848.0,710.0 849.0,719.9 850.0,728.6 851.0,735.3 852.0,739.6 853.0,741.0 854.0,739.4 855.0,735.0 856.0,728.2 857.0,719.4 858.0,709.5 859.0,699.3 860.0,689.7 861.0,681.4 862.0,675.3 863.0,671.8 864.0,671.1 865.0,673.5 866.0,678.6 867.0,686.0 868.0,695.1 869.0,705.2 870.0,715.3 871.0,724.7 872.0,732.4 873.0,737.9 874.0,740.7 875.0,740.5 876.0,737.4 877.0,731.7 878.0,723.7 879.0,714.2 880.0,704.1 881.0,694.1 882.0,685.1 883.0,677.9 884.0,673.1 885.0,671.0 886.0,672.0 887.0,675.8 888.0,682.3 889.0,690.7 890.0,700.4 891.0,710.6 892.0,720.4 893.0,729.0 894.0,735.6 895.0,739.8 896.0,741.0 897.0,739.3 898.0,734.7 899.0,727.7 900.0,718.8 901.0,708.9 902.0,698.7 903.0,689.1 904.0,681.0 905.0,675.0 906.0,671.6 907.0,671.2 908.0,673.7 909.0,679.0 910.0,686.5 911.0,695.7 912.0,705.8 913.0,715.9 914.0,725.2 915.0,732.8 916.0,738.2 917.0,740.8 918.0,740.4 919.0,737.2 920.0,731.2 921.0,723.2 922.0,713.6 923.0,703.5 924.0,693.5 925.0,684.6 926.0,677.5 927.0,672.9 928.0,671.0 929.0,672.2 930.0,676.2 931.0,682.7 932.0,691.2 933.0,701.0 934.0,711.2 935.0,721.0 936.0,729.5 937.0,736.0 938.0,739.9 939.0,741.0 940.0,739.1 941.0,734.3 942.0,727.2 943.0,718.3 944.0,708.3 945.0,698.1 946.0,688.6 947.0,680.6 948.0,674.7 949.0,671.5 950.0,671.3 951.0,673.9 952.0,679.4 953.0,687.0 954.0,696.3 955.0,706.4 956.0,716.5 957.0,725.7 958.0,733.2 959.0,738.4 960.0,740.8 961.0,740.3 962.0,736.9 963.0,730.8 964.0,722.6 965.0,713.0 966.0,702.9 967.0,692.9 968.0,684.1 969.0,677.2 970.0,672.7 971.0,671.0 972.0,672.3 973.0,676.5 974.0,683.2 975.0,691.8 976.0,701.6 977.0,711.8 978.0,721.5 979.0,729.9 980.0,736.3 981.0,740.1 982.0,740.9 983.0,738.8 984.0,734.0 985.0,726.7 986.0,717.7 987.0,707.7 988.0,697.5 989.0,688.1 990.0,680.2 991.0,674.5 992.0,671.4 993.0,671.3 994.0,674.2 995.0,679.8 996.0,687.5 997.0,696.9 998.0,707.0 999.0,717.1 1000.0,726.2 1001.0,733.6 1002.0,738.6 1003.0,740.9 1004.0,740.2 1005.0,736.6 1006.0,730.4 1007.0,722.1 1008.0,712.4 1009.0,702.2 1010.0,692.4 1011.0,683.6 1012.0,676.8 1013.0,672.5 1014.0,671.0 1015.0,672.5 1016.0,676.8 1017.0,683.6 1018.0,692.4 1019.0,702.2 1020.0,712.4 1021.0,722.1 1022.0,730.4 1023.0,736.6 1024.0,740.2 1025.0,740.9 1026.0,738.6 1027.0,733.6 1028.0,726.2 1029.0,717.1 1030.0,707.0 1031.0,696.9 1032.0,687.5 1033.0,679.8 1034.0,674.2 1035.0,671.3 1036.0,671.4 1037.0,674.5 1038.0,680.2 1039.0,688.1 1040.0,697.5 1041.0,707.7 1042.0,717.7 1043.0,726.7 1044.0,734.0 1045.0,738.8 1046.0,740.9 1047.0,740.1 1048.0,736.3 1049.0,729.9 1050.0,721.5 1051.0,711.8 1052.0,701.6 1053.0,691.8 1054.0,683.2 1055.0,676.5 1056.0,672.3 1057.0,671.0 1058.0,672.7 1059.0,677.2 1060.0,684.1 1061.0,692.9 1062.0,702.9 1063.0,713.0 1064.0,722.6 1065.0,730.8 1066.0,736.9 1067.0,740.3 1068.0,740.8 1069.0,738.4 1070.0,733.2 1071.0,725.7 1072.0,716.5 1073.0,706.4 1074.0,696.3 1075.0,687.0 1076.0,679.4 1077.0,673.9 1078.0,671.3 1079.0,671.5 1080.0,674.7 1081.0,680.6 1082.0,688.6 1083.0,698.1 1084.0,708.3 1085.0,718.3 1086.0,727.2 1087.0,734.3 1088.0,739.1 1089.0,741.0 1090.0,739.9 1091.0,736.0 1092.0,729.5 1093.0,721.0 1094.0,711.2 1095.0,701.0 1096.0,691.2 1097.0,682.7 1098.0,676.2 1099.0,672.2 1100.0,671.0 1101.0,672.9 1102.0,677.5 1103.0,684.6 1104.0,693.5 1105.0,703.5 1106.0,713.6 1107.0,723.2 1108.0,731.2 1109.0,737.2 1110.0,740.4 1111.0,740.8 1112.0,738.2 1113.0,732.8 1114.0,725.2 1115.0,715.9 1116.0,705.8 1117.0,695.7 1118.0,686.5 1119.0,679.0 1120.0,673.7 1121.0,671.2 1122.0,671.6 1123.0,675.0 1124.0,681.0 1125.0,689.1 1126.0,698.7 1127.0,708.9 1128.0,718.8 1129.0,727.7 1130.0,734.7 1131.0,739.3 1132.0,741.0 1133.0,739.8 1134.0,735.6 1135.0,729.0 1136.0,720.4 1137.0,710.6 1138.0,700.4 1139.0,690.7 1140.0,682.3 1141.0,675.8 1142.0,672.0 1143.0,671.0 1144.0,673.1 1145.0,677.9 1146.0,685.1 1147.0,694.1 1148.0,704.1 1149.0,714.2 1150.0,723.7 1151.0,731.7 1152.0,737.4 1153.0,740.5 1154.0,740.7 1155.0,737.9 1156.0,732.4 1157.0,724.7 1158.0,715.3 1159.0,705.2 1160.0,695.1 1161.0,686.0 1162.0,678.6 1163.0,673.5 1164.0,671.1 1165.0,671.8 1166.0,675.3 1167.0,681.4 1168.0,689.7 1169.0,699.3 1170.0,709.5 1171.0,719.4 1172.0,728.2 1173.0,735.0 1174.0,739.4 1175.0,741.0 1176.0,739.6 1177.0,735.3 1178.0,728.6 1179.0,719.9 1180.0,710.0 1181.0,699.8 1182.0,690.1 1183.0,681.8 1184.0,675.5 1185.0,671.9 1186.0,671.1 1187.0,673.3 1188.0,678.3" fill="none" stroke="#ff0000" stroke-width="1.8"/>
<rect x="578" y="698" width="2.5" height="9" fill="#0000ff"/>
<circle cx="579.5" cy="519.5" r="4" fill="none" stroke="#ff00ff" stroke-width="1.5"/>
<path d="M569 367 H590 L579.5 377 Z" fill="#ff00ff"/>
<path d="M569 367 H590 L588 369 H571 Z" fill="#00ffff"/>
<rect x="578" y="368" width="3" height="6" fill="#e0e000"/>
</svg>
<div class="a" style="left:565px;top:818px;width:671px;height:21px;background:#f0f0f0"></div>
<div class="a" style="left:585px;top:819px;width:629px;height:13px;background:#cdcdcd"></div>
<svg class="a" style="left:569px;top:818px" width="14" height="14"><path d="M9 3 L5 7 L9 11" stroke="#606060" stroke-width="2" fill="none"/></svg>
<svg class="a" style="left:1219px;top:818px" width="14" height="14"><path d="M5 3 L9 7 L5 11" stroke="#606060" stroke-width="2" fill="none"/></svg>
<div class="a" style="left:566px;top:839px;width:71px;height:72px;border:1px solid #a0a0a0;border-right-color:#fff;border-bottom-color:#fff;background:#f0f0f0"></div>
<div class="a" style="left:567px;top:840px;width:69px;height:70px;border:1px solid #fff;border-right-color:#a0a0a0;border-bottom-color:#a0a0a0"></div>
<div class="t" style="left:572px;top:850px;font-size:13px">T1</div>
<div class="t" style="left:572px;top:867px;font-size:13px">T2</div>
<div class="t" style="left:572px;top:891px;font-size:13px">T2-T1</div>
<div class="a" style="left:597px;top:847px;width:16px;height:18px;background:#e1e1e1;border:1px solid #c8c8c8"></div>
<svg class="a" style="left:597px;top:848px" width="17" height="17"><path d="M3 8.5 L9 3 V6.5 H14 V10.5 H9 V14 Z" fill="#000"/></svg>
<div class="a" style="left:618px;top:847px;width:16px;height:18px;background:#e1e1e1;border:1px solid #c8c8c8"></div>
<svg class="a" style="left:618px;top:848px" width="17" height="17"><path d="M14 8.5 L8 3 V6.5 H3 V10.5 H8 V14 Z" fill="#000"/></svg>
<div class="a" style="left:597px;top:869px;width:16px;height:18px;background:#e1e1e1;border:1px solid #c8c8c8"></div>
<svg class="a" style="left:597px;top:870px" width="17" height="17"><path d="M3 8.5 L9 3 V6.5 H14 V10.5 H9 V14 Z" fill="#000"/></svg>
<div class="a" style="left:618px;top:869px;width:16px;height:18px;background:#e1e1e1;border:1px solid #c8c8c8"></div>
<svg class="a" style="left:618px;top:870px" width="17" height="17"><path d="M14 8.5 L8 3 V6.5 H3 V10.5 H8 V14 Z" fill="#000"/></svg>
<div class="a" style="left:639px;top:839px;width:394px;height:71px;background:#fff;border:2px solid #6e6e6e;border-right:1px solid #e8e8e8;border-bottom:1px solid #e8e8e8"></div>
<div class="t" style="left:623px;width:120px;text-align:center;top:843px;font-size:13px">Time</div>
<div class="t" style="left:623px;width:120px;text-align:center;top:859px;font-size:13px">0.000 s</div>
<div class="t" style="left:623px;width:120px;text-align:center;top:875px;font-size:13px">0.000 s</div>
<div class="t" style="left:623px;width:120px;text-align:center;top:891px;font-size:13px">0.000 s</div>
<div class="t" style="left:720px;width:120px;text-align:center;top:843px;font-size:13px">Channel_A</div>
<div class="t" style="left:720px;width:120px;text-align:center;top:859px;font-size:13px">0.000 V</div>
<div class="t" style="left:720px;width:120px;text-align:center;top:875px;font-size:13px">0.000 V</div>
<div class="t" style="left:720px;width:120px;text-align:center;top:891px;font-size:13px">0.000 V</div>
<div class="t" style="left:817px;width:120px;text-align:center;top:843px;font-size:13px">Channel_B</div>
<div class="t" style="left:817px;width:120px;text-align:center;top:859px;font-size:13px">0.000 V</div>
<div class="t" style="left:817px;width:120px;text-align:center;top:875px;font-size:13px">0.000 V</div>
<div class="t" style="left:817px;width:120px;text-align:center;top:891px;font-size:13px">0.000 V</div>
<div class="btn" style="left:1042px;top:847px;width:75px;height:26px;line-height:24px;font-size:13px">Reverse</div>
<div class="btn" style="left:1042px;top:881px;width:75px;height:25px;line-height:23px;font-size:13px">Save</div>
<div class="t" style="left:1127px;top:899px;font-size:13px">Ext. trigger</div>
<div class="radio" style="left:1199px;top:900px;width:15px;height:15px"></div>
<div class="grp" style="left:566px;top:927px;width:161px;height:90px;border-bottom:none"></div>
<div class="gl" style="left:577px;top:920px;font-size:13px">Timebase</div>
<div class="grp" style="left:726px;top:927px;width:158px;height:90px;border-bottom:none"></div>
<div class="gl" style="left:736px;top:920px;font-size:13px">Channel A</div>
<div class="grp" style="left:884px;top:927px;width:159px;height:90px;border-bottom:none"></div>
<div class="gl" style="left:893px;top:920px;font-size:13px">Channel B</div>
<div class="grp" style="left:1043px;top:927px;width:191px;height:90px;border-bottom:none"></div>
<div class="gl" style="left:1052px;top:920px;font-size:13px">Trigger</div>
<div class="t" style="left:569px;top:942px;font-size:13px">Scale:</div>
<div class="inp" style="left:613px;top:935px;width:106px;height:24px;line-height:22px;font-size:13px;padding-left:7px">50 ms/Div</div>
<div class="t" style="left:569px;top:966px;font-size:13px">X pos.(Div):</div>
<div class="inp" style="left:644px;top:961px;width:75px;height:24px;line-height:22px;font-size:13px;padding-left:6px">0</div>
<div class="btn sel" style="left:575px;top:990px;width:30px;height:22px;line-height:20px;font-size:13px">Y/T</div>
<div class="btn" style="left:607px;top:990px;width:32px;height:22px;line-height:20px;font-size:13px">Add</div>
<div class="btn" style="left:644px;top:990px;width:31px;height:22px;line-height:20px;font-size:13px">B/A</div>
<div class="btn" style="left:678px;top:990px;width:34px;height:22px;line-height:20px;font-size:13px">A/B</div>
<div class="t" style="left:730px;top:942px;font-size:13px">Scale:</div>
<div class="inp" style="left:774px;top:935px;width:106px;height:24px;line-height:22px;font-size:13px;padding-left:7px">200 mV/Div</div>
<div class="t" style="left:730px;top:966px;font-size:13px">Y pos.(Div):</div>
<div class="inp" style="left:805px;top:961px;width:75px;height:24px;line-height:22px;font-size:13px;padding-left:6px">-1.6</div>
<div class="btn sel" style="left:731px;top:990px;width:28px;height:22px;line-height:20px;font-size:13px">AC</div>
<div class="btn" style="left:762px;top:990px;width:30px;height:22px;line-height:20px;font-size:13px">0</div>
<div class="btn" style="left:795px;top:990px;width:30px;height:22px;line-height:20px;font-size:13px">DC</div>
<div class="radio" style="left:859px;top:992px;width:15px;height:15px"><i></i></div>
<div class="t" style="left:887px;top:942px;font-size:13px">Scale:</div>
<div class="inp" style="left:933px;top:935px;width:106px;height:24px;line-height:22px;font-size:13px;padding-left:7px">200 mV/Div</div>
<div class="t" style="left:887px;top:966px;font-size:13px">Y pos.(Div):</div>
<div class="inp" style="left:964px;top:961px;width:75px;height:24px;line-height:22px;font-size:13px;padding-left:6px">1</div>
<div class="btn sel" style="left:890px;top:992px;width:29px;height:21px;line-height:19px;font-size:13px">AC</div>
<div class="btn" style="left:922px;top:992px;width:26px;height:21px;line-height:19px;font-size:13px">0</div>
<div class="btn" style="left:951px;top:992px;width:30px;height:21px;line-height:19px;font-size:13px">DC</div>
<div class="btn" style="left:984px;top:992px;width:20px;height:21px;line-height:19px;font-size:13px">-</div>
<div class="radio" style="left:1023px;top:994px;width:15px;height:15px"><i></i></div>
<div class="t" style="left:1047px;top:942px;font-size:13px">Edge:</div>
<div class="btn sel" style="left:1102px;top:940px;width:19px;height:19px"></div>
<svg class="a" style="left:1102px;top:940px" width="19" height="19"><path d="M3.5 13.5 H9.5 V5.5 H15.5 M6.5 10 L11.5 6" stroke="#000" stroke-width="1.4" fill="none"/></svg>
<div class="btn" style="left:1124px;top:940px;width:19px;height:19px"></div>
<svg class="a" style="left:1124px;top:940px" width="19" height="19"><path d="M3.5 4.5 H9.5 V12.5 H15.5 M6.5 7.5 L11.5 11" stroke="#000" stroke-width="1.4" fill="none"/></svg>
<div class="btn sel" style="left:1149px;top:940px;width:22px;height:21px;line-height:19px;font-size:13px">A</div>
<div class="btn" style="left:1174px;top:940px;width:20px;height:21px;line-height:19px;font-size:13px;color:#a0a0a0;background:#d8d8d8;border-color:#d0d0d0">B</div>
<div class="btn" style="left:1197px;top:940px;width:27px;height:21px;line-height:19px;font-size:13px;color:#a0a0a0;background:#d8d8d8;border-color:#d0d0d0">Ext</div>
<div class="t" style="left:1047px;top:966px;font-size:13px">Level:</div>
<div class="inp" style="left:1101px;top:966px;width:85px;height:23px;line-height:24px;font-size:13px;padding-left:6px;border-width:2px 1px 1px 2px;border-color:#7a7a7a">0</div>
<div class="inp" style="left:1185px;top:966px;width:40px;height:23px;line-height:22px;font-size:13px;padding-left:8px;border-width:2px 1px 1px 2px">V</div>
<div class="btn" style="left:1050px;top:990px;width:44px;height:22px;line-height:20px;font-size:13px">Single</div>
<div class="btn" style="left:1097px;top:990px;width:50px;height:22px;line-height:20px;font-size:13px">Normal</div>
<div class="btn" style="left:1150px;top:990px;width:36px;height:22px;line-height:20px;font-size:13px">Auto</div>
<div class="btn sel" style="left:1188px;top:990px;width:39px;height:22px;line-height:20px;font-size:13px">None</div>
<svg class="a" style="left:1220px;top:1001px" width="16" height="16"><g fill="#a0a0a0"><rect x="12" y="2.5" width="1.6" height="1.6"/><rect x="8.4" y="7.3" width="1.6" height="1.6"/><rect x="12" y="7.3" width="1.6" height="1.6"/><rect x="3.5" y="11.7" width="1.6" height="1.6"/><rect x="7.6" y="11.7" width="1.6" height="1.6"/><rect x="12" y="11.7" width="1.6" height="1.6"/></g></svg>
</body></html>
